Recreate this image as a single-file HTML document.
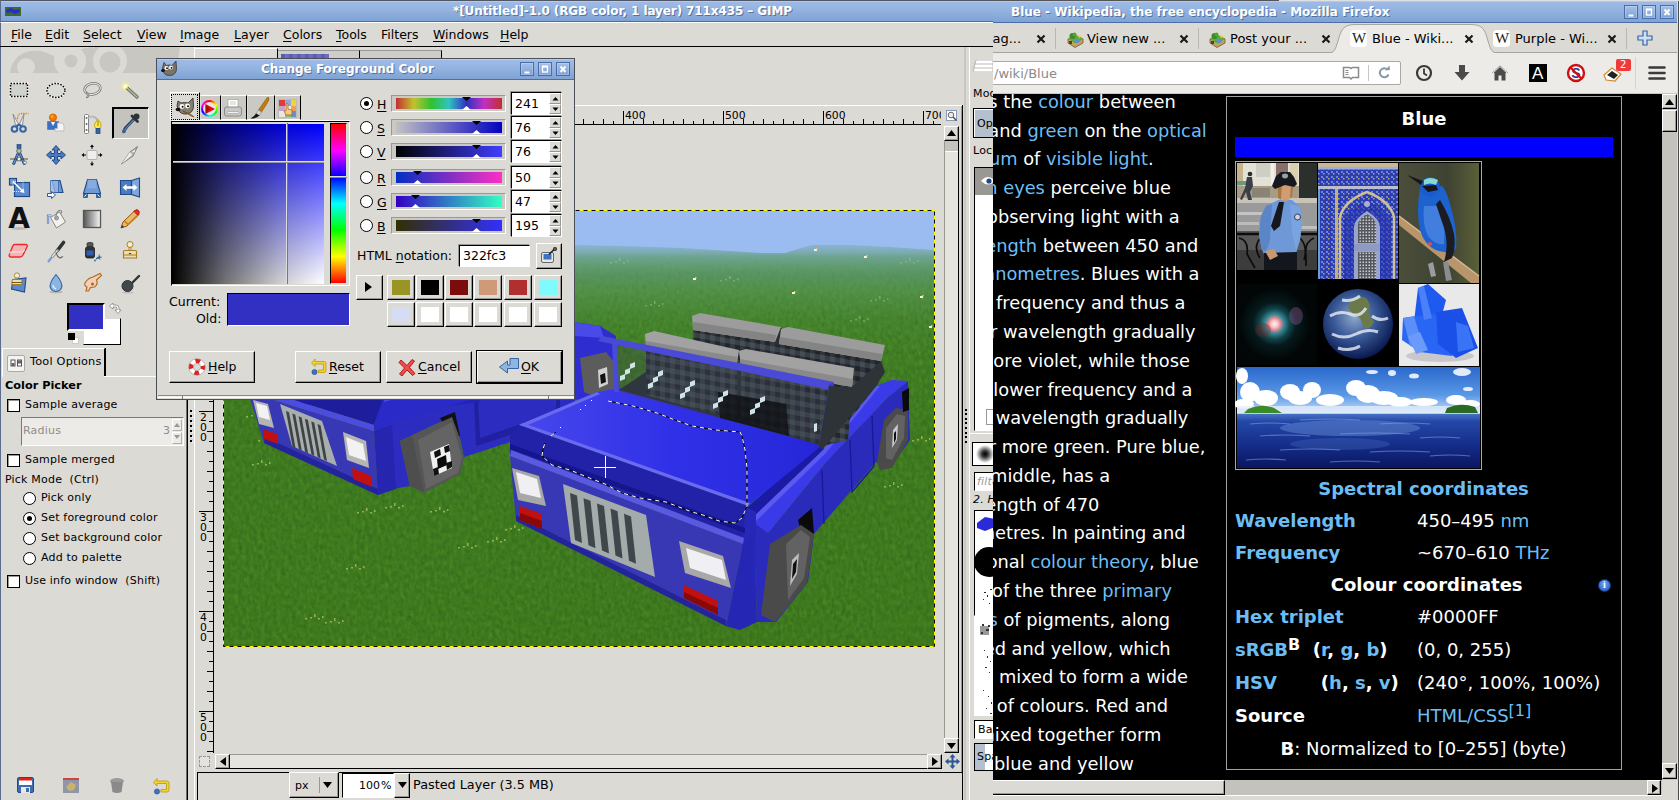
<!DOCTYPE html>
<html lang="en">
<head>
<meta charset="utf-8">
<title>GIMP and Firefox</title>
<style>
*{box-sizing:border-box;margin:0;padding:0}
html,body{width:1680px;height:800px;overflow:hidden;background:#dcdad5}
body{position:relative;font-family:"DejaVu Sans","Liberation Sans",sans-serif;font-size:13px;color:#000;line-height:1}
.a{position:absolute}
.t{position:absolute;white-space:nowrap}
u{text-decoration:underline;text-underline-offset:2px}
/* ---------- window title bars ---------- */
.tb{position:absolute;background:linear-gradient(#9ebbe6 0,#98b6e2 30%,#7fa3d5 100%);border-top:1px solid #505664;border-bottom:1px solid #4b6ea6;box-shadow:inset 0 1px 0 #b2caee}
.tbt{position:absolute;color:#fff;font-weight:bold;font-size:13px;text-shadow:1px 1px 0 rgba(40,60,100,.55);white-space:nowrap}
.wb{position:absolute;width:14px;height:14px;border:1px solid #4a6da8;background:linear-gradient(#a4c0e8,#7da1d6);box-shadow:inset 0 0 0 1px rgba(255,255,255,.22)}
/* ---------- gimp ---------- */
#gimp{left:0;top:0;width:993px;height:800px;background:#dcdad5}
.menu span{position:absolute;top:29px;font-size:12.5px}
.ck{position:absolute;width:13px;height:13px;background:#fff;border:1px solid #000;box-shadow:inset 1px 1px 0 #9a9892}
.rd{position:absolute;width:13px;height:13px;background:#fff;border:1px solid #000;border-radius:50%}
.rd.on::after{content:"";position:absolute;left:3px;top:3px;width:5px;height:5px;border-radius:50%;background:#000}
.sm{font-size:11px;letter-spacing:.2px}
.btn{position:absolute;background:#dcdad5;border:1px solid;border-color:#fff #000 #000 #fff;box-shadow:inset -1px -1px 0 #9a9892}
.sunk{position:absolute;border:1px solid;border-color:#9a9892 #fff #fff #9a9892;box-shadow:inset 1px 1px 0 #000}
/* ---------- firefox ---------- */
#ff{left:993px;top:0;width:687px;height:800px;background:#000;overflow:hidden}
.wk{color:#fff;font-size:17.8px}
.wk a,.lk{color:#6dbef6;text-decoration:none}
.ib{font-size:18px;color:#fff}
.ib b.l{color:#6cbaf2}
</style>
</head>
<body>
<!-- ======================= GIMP WINDOW ======================= -->
<div id="gimp" class="a">
<!-- title bar -->
<div class="tb" style="left:0;top:0;width:993px;height:22px;border-left:1px solid #5b6c8c"></div>
<svg class="a" style="left:5px;top:7px" width="16" height="9" viewBox="0 0 16 9"><rect width="16" height="9" fill="#3e6b2c"/><path d="M1 3l5-2 4 2 4-1 1 3-5 2-4-2-4 1z" fill="#2a2ad0"/></svg>
<div class="tbt" style="left:453px;top:5px;font-size:12px;letter-spacing:-.1px">*[Untitled]-1.0 (RGB color, 1 layer) 711x435 – GIMP</div>
<!-- menu bar -->
<div class="a" style="left:0;top:22px;width:993px;height:24px;background:#dcdad5;border-left:1px solid #5b6c8c;border-top:1px solid #fff"></div>
<div class="menu">
<span style="left:11px"><u>F</u>ile</span><span style="left:45px"><u>E</u>dit</span><span style="left:83px"><u>S</u>elect</span><span style="left:137px"><u>V</u>iew</span><span style="left:180px"><u>I</u>mage</span><span style="left:234px"><u>L</u>ayer</span><span style="left:283px"><u>C</u>olors</span><span style="left:336px"><u>T</u>ools</span><span style="left:381px">Filte<u>r</u>s</span><span style="left:433px"><u>W</u>indows</span><span style="left:500px"><u>H</u>elp</span>
</div>
<div class="a" style="left:0;top:46px;width:993px;height:1px;background:#000"></div>
<div class="a" style="left:0;top:47px;width:1px;height:753px;background:#5b6c8c"></div>
<!-- toolbox wilber watermark -->
<svg class="a" style="left:10px;top:47px" width="170" height="27" viewBox="0 0 170 27"><path d="M0 26C2 10 14 2 30 4c12 2 20 10 24 10 4-8 16-14 34-14h82l-4 26z" fill="#c9c7c2"/><circle cx="16" cy="20" r="9" fill="#dcdad5"/><circle cx="60" cy="14" r="16" fill="#dcdad5"/><circle cx="61" cy="14" r="6.500" fill="#c9c7c2"/><circle cx="100" cy="14" r="17" fill="#dcdad5"/><circle cx="100" cy="15" r="10.500" fill="#c9c7c2"/></svg>
<div class="a" style="left:112px;top:107px;width:37px;height:32px;background:#c5c3be;border:1px solid;border-color:#000 #fff #fff #000;box-shadow:inset 1px 1px 0 #000"></div>
<svg class="a" style="left:7px;top:79px" width="24" height="24" viewBox="0 0 24 24"><rect x="3.500" y="4.500" width="17" height="13" fill="#d3d7cf" stroke="#fff" stroke-width="2"/><rect x="3.500" y="4.500" width="17" height="13" fill="#d0d3cd" stroke="#000" stroke-width="1.500" stroke-dasharray="1.500 1.500"/></svg>
<svg class="a" style="left:43.5px;top:79px" width="24" height="24" viewBox="0 0 24 24"><ellipse cx="12" cy="11.500" rx="9" ry="7" fill="#dcdedb" stroke="#fff" stroke-width="2"/><ellipse cx="12" cy="11.500" rx="9" ry="7" fill="#d9dbd7" stroke="#000" stroke-width="1.500" stroke-dasharray="1.500 1.500"/></svg>
<svg class="a" style="left:80px;top:79px" width="24" height="24" viewBox="0 0 24 24"><ellipse cx="12.500" cy="10" rx="8" ry="5.500" fill="none" stroke="#777" stroke-width="2.600" transform="rotate(-12 12 10)"/><ellipse cx="12.500" cy="10" rx="8" ry="5.500" fill="none" stroke="#e4e4e2" stroke-width="1.100" transform="rotate(-12 12 10)"/><path d="M6 13l1.500 3.500-1 2.500 2-1 .5-3z" fill="#ddd" stroke="#777" stroke-width=".9"/></svg>
<svg class="a" style="left:117.5px;top:79px" width="24" height="24" viewBox="0 0 24 24"><circle cx="7.500" cy="7.500" r="4.500" fill="#fff36a" opacity=".55"/><path d="M9 9l10 9" stroke="#555" stroke-width="3.200" stroke-linecap="round"/><path d="M9 9l10 9" stroke="#a9b59a" stroke-width="1.700" stroke-linecap="round"/><circle cx="7.500" cy="7.500" r="2.200" fill="#fffde0"/></svg>
<svg class="a" style="left:7px;top:111px" width="24" height="24" viewBox="0 0 24 24"><path d="M12 14l-6-11 2.500 11zM12 14l5-11-1.500 11z" fill="#eeeeec" stroke="#888" stroke-width=".9"/><path d="M10.500 8q0-5.500 4-5.500h7" fill="none" stroke="#f57900" stroke-width="1.300" stroke-dasharray="1.300 1"/><circle cx="7.500" cy="18" r="2.800" fill="none" stroke="#3465a4" stroke-width="2"/><circle cx="16" cy="18" r="2.800" fill="none" stroke="#3465a4" stroke-width="2"/><path d="M9.500 15.500l2.500-2 2.500 2" fill="none" stroke="#3465a4" stroke-width="2"/></svg>
<svg class="a" style="left:43.5px;top:111px" width="24" height="24" viewBox="0 0 24 24"><rect x="3.500" y="10.500" width="11" height="8" fill="#3b6fc4" stroke="#75507b" stroke-dasharray="1 1"/><path d="M7 11l2 4 2-4" fill="#fff"/><circle cx="9" cy="6.500" r="3.600" fill="#f57900" stroke="#ce5c00" stroke-width=".8"/><circle cx="8" cy="5.500" r="1.300" fill="#fcaf3e"/><path d="M13.500 12h4q2.500 0 2.500 3v5h-9v-2.500h2.500z" fill="#f4f4f2" stroke="#bbb" stroke-width=".9"/></svg>
<svg class="a" style="left:80px;top:111px" width="24" height="24" viewBox="0 0 24 24"><rect x="4.500" y="3.500" width="4" height="19" rx="1" fill="#fff" stroke="#777" stroke-width=".9"/><circle cx="6.500" cy="7" r="1" fill="#666"/><circle cx="6.500" cy="13" r="1" fill="#666"/><circle cx="6.500" cy="19" r="1" fill="#666"/><path d="M8 7q6-4 10 3" fill="none" stroke="#888" stroke-width="1.600"/><path d="M8 7q6-4 10 3" fill="none" stroke="#eee" stroke-width=".7"/><path d="M18 8.500q4 4 3 7l-1.500 2h-3.500l-1.500-2q-1-3 3.500-7z" fill="#fce94f" stroke="#c4a000" stroke-width=".9"/><path d="M18 10v5" stroke="#8f7a00" stroke-width=".9"/><rect x="16" y="17.500" width="4" height="5" fill="#3465a4" stroke="#204a87" stroke-width=".8"/></svg>
<svg class="a" style="left:117.5px;top:111px" width="24" height="24" viewBox="0 0 24 24"><path d="M16.500 7.500l-8 8.500q-2 2-2.500 4.500" fill="none" stroke="#2e3436" stroke-width="3.200" stroke-linecap="round"/><path d="M15.500 9l-7 7.500q-1.500 1.500-2 3.500" fill="none" stroke="#4f7dbf" stroke-width="1.600" stroke-linecap="round"/><path d="M14 5l5.500 5.500" stroke="#2e3436" stroke-width="2.800" stroke-linecap="round"/><circle cx="18.500" cy="5.500" r="3" fill="#2e3436"/><path d="M5.500 17.500q3 3.500 0 5-3-1.500 0-5z" fill="#3465a4"/></svg>
<svg class="a" style="left:7px;top:143px" width="24" height="24" viewBox="0 0 24 24"><path d="M12 6l-6.500 15 2 .5 4.500-11 4.500 11 2-.5z" fill="#729fcf" stroke="#204a87" stroke-width="1"/><rect x="10" y="1.500" width="4" height="4" fill="#3465a4" stroke="#204a87" stroke-width=".7"/><circle cx="12" cy="8" r="2.300" fill="#babdb6" stroke="#555" stroke-width=".8"/><path d="M3 16h18" stroke="#333" stroke-width=".8"/><rect x="10.200" y="14.200" width="3.600" height="3.600" fill="#eee" stroke="#555" stroke-width=".8"/><circle cx="18" cy="19.500" r="1.500" fill="#eee" stroke="#555" stroke-width=".6"/></svg>
<svg class="a" style="left:43.5px;top:143px" width="24" height="24" viewBox="0 0 24 24"><path d="M12 2.500l4 4.500h-2.500v3.500h3.500v-2.500l4.500 4-4.500 4v-2.500h-3.500v3.500h2.500l-4 4.500-4-4.500h2.500v-3.500h-3.500v2.500l-4.500-4 4.500-4v2.500h3.500v-3.500h-2.500z" fill="#4a7bc0" stroke="#204a87" stroke-width="1"/></svg>
<svg class="a" style="left:80px;top:143px" width="24" height="24" viewBox="0 0 24 24"><rect x="7" y="7.500" width="10" height="9" rx="1" fill="#eeeeec" stroke="#aaa" stroke-width=".9"/><path d="M12 1.500l2 2.500h-1.500v2h-1v-2h-1.500zM12 23l-2-2.500h1.500v-2h1v2h1.500zM1.500 12l2.500-2v1.500h2v1h-2v1.500zM22.500 12l-2.500 2v-1.500h-2v-1h2v-1.500z" fill="#000"/></svg>
<svg class="a" style="left:117.5px;top:143px" width="24" height="24" viewBox="0 0 24 24"><path d="M3.500 21l8.500-12 7.500-5.500-4.500 9.500z" fill="#babdb6" stroke="#777" stroke-width=".9"/><path d="M3.500 21l8.500-12 2 3z" fill="#eeeeec"/><path d="M13 9.500l4-3.500v3z" fill="#fff" stroke="#aaa" stroke-width=".6"/></svg>
<svg class="a" style="left:7px;top:175px" width="24" height="24" viewBox="0 0 24 24"><rect x="7.500" y="7.500" width="15" height="14" fill="#5b8ad0" stroke="#204a87" stroke-width="1.200"/><rect x="2.500" y="3.500" width="7" height="6.500" fill="#729fcf" stroke="#204a87" stroke-width="1.200"/><rect x="6" y="6.500" width="10" height="10" fill="none" stroke="#fff" stroke-width=".8" stroke-dasharray="1 1"/><path d="M6 6.500l10 10" stroke="#fff" stroke-width="1.600"/><path d="M17.500 18l-1-4.500-3.500 3.500z" fill="#fff"/></svg>
<svg class="a" style="left:43.5px;top:175px" width="24" height="24" viewBox="0 0 24 24"><path d="M8 5.500h8l3 12h-8z" fill="#6e9ad6" stroke="#204a87" stroke-width="1.100"/><path d="M6.500 5.500h8v12h-8z" fill="#9dbbe6" stroke="#3465a4" stroke-width="1" opacity=".75"/><path d="M3.500 18.500h4v-2l4 3.500-4 3.500v-2h-4z" fill="#fff" stroke="#204a87" stroke-width=".9"/></svg>
<svg class="a" style="left:80px;top:175px" width="24" height="24" viewBox="0 0 24 24"><path d="M7.500 4.500h9l4 14h-17z" fill="#6e9ad6" stroke="#204a87" stroke-width="1.100"/><rect x="7.500" y="4.500" width="9" height="9" fill="#8fb2e2" opacity=".7"/><rect x="3.500" y="18.500" width="4" height="4" fill="#3465a4" stroke="#204a87" stroke-width=".7"/><rect x="16.500" y="18.500" width="4" height="4" fill="#3465a4" stroke="#204a87" stroke-width=".7"/><path d="M4.500 21.500l2-2M19.500 21.500l-2-2" stroke="#fff" stroke-width="1"/></svg>
<svg class="a" style="left:117.5px;top:175px" width="24" height="24" viewBox="0 0 24 24"><path d="M2.500 5.500h11v14h-11z" fill="#4a7bc0" stroke="#204a87" stroke-width="1.100"/><path d="M13.500 5.500l8-2.500v19l-8-2.500z" fill="#7ea6dc" stroke="#204a87" stroke-width="1.100"/><path d="M4.500 12.500l4-3.500v2.200h7v-2.200l4 3.500-4 3.500v-2.200h-7v2.200z" fill="#fff"/></svg>
<svg class="a" style="left:7px;top:207px" width="24" height="24" viewBox="0 0 24 24"><ellipse cx="12" cy="21.500" rx="8" ry="1.500" fill="#000" opacity=".15"/><text x="12" y="21" font-family="DejaVu Sans,Liberation Sans,sans-serif" font-weight="bold" font-size="28" text-anchor="middle" fill="#111">A</text></svg>
<svg class="a" style="left:43.5px;top:207px" width="24" height="24" viewBox="0 0 24 24"><path d="M4 17v-8.500h3.500" fill="none" stroke="#5d7fbf" stroke-width="2.200"/><path d="M4 17v-8.500h3.500" fill="none" stroke="#c6d4ee" stroke-width=".8"/><path d="M6.500 10.500l9-5.500 6 10-9 6z" fill="#f1f1ef" stroke="#888a85" stroke-width="1"/><path d="M12 9q1-6 4.500-5.500 2 1 .5 3" fill="none" stroke="#888a85" stroke-width="1.200"/><circle cx="12.500" cy="11" r="2" fill="#aaa" stroke="#777" stroke-width=".7"/></svg>
<svg class="a" style="left:80px;top:207px" width="24" height="24" viewBox="0 0 24 24"><defs><linearGradient id="gq" x1="0" x2="1"><stop offset="0" stop-color="#555"/><stop offset="1" stop-color="#f8f8f8"/></linearGradient></defs><rect x="3.500" y="3.500" width="17" height="17" fill="url(#gq)" stroke="#555753" stroke-width="1.300"/></svg>
<svg class="a" style="left:117.5px;top:207px" width="24" height="24" viewBox="0 0 24 24"><path d="M3 21l2-6 12-11.500 4 4-12 11.500z" fill="#e9b96e" stroke="#8f5902" stroke-width="1"/><path d="M6.500 14l3.500 3.500 11-10.500" fill="none" stroke="#c17d11" stroke-width="1.600"/><path d="M16 4.500l1.500-1.500q1.500-1 3 .5t.5 3l-1.500 1.500z" fill="#ef2929" stroke="#a40000" stroke-width=".7"/><path d="M3 21l1-3 2 2z" fill="#333"/></svg>
<svg class="a" style="left:7px;top:239px" width="24" height="24" viewBox="0 0 24 24"><path d="M7.500 5.500h11q2.500 0 1.500 2.500l-4 8q-1 2-3 2h-9q-2.500 0-1.500-2.500l3-8q1-2 2-2z" fill="#f5b5b5" stroke="#ef2929" stroke-width="1.400"/><path d="M3 14.500q0-1.500 2-1.500h9.500q2 0 3-2" fill="none" stroke="#f9d5d5" stroke-width="1.500"/></svg>
<svg class="a" style="left:43.5px;top:239px" width="24" height="24" viewBox="0 0 24 24"><path d="M19.500 3.500l-6.500 8.500" stroke="#2e3436" stroke-width="3.600" stroke-linecap="round"/><path d="M13.500 11.500l-5 6" stroke="#888a85" stroke-width="3" stroke-linecap="round"/><path d="M13 12l-4.500 5.500" stroke="#eeeeec" stroke-width="1.200" stroke-linecap="round"/><path d="M12 13q1 5 4 6l3-1.500" fill="none" stroke="#666" stroke-width="1.200"/><path d="M7.500 18.500l-3.500 4.500" stroke="#5d8fd6" stroke-width="2.200" opacity=".8"/></svg>
<svg class="a" style="left:80px;top:239px" width="24" height="24" viewBox="0 0 24 24"><path d="M5.500 10q0-2 2-2.500h5q2 .5 2 2.500v7q0 2-2 2h-5q-2 0-2-2z" fill="#2e3436" stroke="#1a1a1a" stroke-width=".8"/><rect x="6.500" y="11.500" width="7" height="5" fill="#2f5fb3"/><rect x="7" y="3.500" width="6" height="4" rx="1.500" fill="#555753" stroke="#2e3436" stroke-width=".8"/><path d="M16 19l2.500-1.500.5-3 1 3 2.500.5-2.500 1 .5 2.500-1.500-2-3 1z" fill="#3465a4"/><circle cx="15" cy="21.500" r=".9" fill="#3465a4"/></svg>
<svg class="a" style="left:117.5px;top:239px" width="24" height="24" viewBox="0 0 24 24"><circle cx="12" cy="5.500" r="3" fill="#f6efd8" stroke="#a97d1b" stroke-width="1"/><path d="M11 8.500h2v3.500h-2z" fill="#e9d9a6" stroke="#a97d1b" stroke-width=".8"/><path d="M5.500 12.500q0-1 1-1h11q1 0 1 1v6.500h-13z" fill="#eadfb8" stroke="#a97d1b" stroke-width="1.100"/><path d="M5.500 16h13" stroke="#a97d1b" stroke-width="1"/><path d="M10.500 14h3l-1.500 1.500z" fill="#333"/></svg>
<svg class="a" style="left:7px;top:271px" width="24" height="24" viewBox="0 0 24 24"><path d="M6 8.500l13-1.500-1.500 14-13-3z" fill="#5b8ad0" stroke="#204a87" stroke-width="1.100"/><circle cx="10" cy="4.500" r="2.600" fill="#f6efd8" stroke="#a97d1b" stroke-width=".9"/><path d="M5 9.500q0-1 1-1h8q1 0 1 1v4h-10z" fill="#eadfb8" stroke="#a97d1b" stroke-width="1"/><path d="M5 11.500h10" stroke="#5a4a10" stroke-width=".9"/></svg>
<svg class="a" style="left:43.5px;top:271px" width="24" height="24" viewBox="0 0 24 24"><ellipse cx="12" cy="21" rx="7" ry="1.500" fill="#000" opacity=".15"/><path d="M12 3.500q7.500 9 5.500 13.500-2 3.500-5.500 3.500t-5.500-3.500q-2-4.500 5.500-13.500z" fill="#8db3e0" stroke="#3465a4" stroke-width="1.100"/><path d="M9 14q0 3 3 4" fill="none" stroke="#fff" stroke-width="1.200" opacity=".8"/></svg>
<svg class="a" style="left:80px;top:271px" width="24" height="24" viewBox="0 0 24 24"><path d="M5 12q3-5 8-6l7-3.500 1.500 2-5 4.500q2 4-2 7l-4 .5-2 3.500h-2.500l1-4q-3-1-2-4z" fill="#f3d0b5" stroke="#b0661a" stroke-width="1.100"/><circle cx="12.500" cy="13" r="1.500" fill="#b0661a"/></svg>
<svg class="a" style="left:117.5px;top:271px" width="24" height="24" viewBox="0 0 24 24"><path d="M11 15l10-10" stroke="#2e3436" stroke-width="2.400" stroke-linecap="round"/><circle cx="9.500" cy="15" r="5.500" fill="#41474a" stroke="#2e3436" stroke-width="1"/><ellipse cx="10" cy="21.500" rx="6" ry="1.200" fill="#000" opacity=".12"/></svg>
<!-- fg/bg -->
<div class="a" style="left:83px;top:318px;width:38px;height:27px;background:#fff;border:1px solid;border-color:#dcdad5 #000 #000 #dcdad5"></div>
<div class="a" style="left:67px;top:303px;width:38px;height:28px;background:#322fc3;border:2px solid;border-color:#000 #fff #fff #000"></div>
<div class="a" style="left:72px;top:337px;width:7px;height:7px;background:#fff;border:1px solid #ccc"></div>
<div class="a" style="left:68px;top:333px;width:7px;height:7px;background:#000"></div>
<svg class="a" style="left:108px;top:302px" width="14" height="14" viewBox="0 0 14 14"><path d="M1.500 4l3.500-3v2h3q3 0 3 3v2h2l-3 3.500-3-3.500h2v-2q0-1-1-1h-3v2z" fill="#fff" stroke="#888" stroke-width=".8"/></svg>
<!-- tool options tab -->
<div class="a" style="left:2px;top:348px;width:103px;height:29px;border:1px solid;border-color:#fff #000 transparent #fff;box-shadow:1px 0 0 #000"></div>
<div class="a" style="left:104px;top:376px;width:82px;height:1px;background:#fff"></div>
<svg class="a" style="left:7px;top:355px" width="18" height="17" viewBox="0 0 18 17"><rect x=".5" y=".5" width="17" height="16" rx="1.500" fill="#f4f4f2" stroke="#aaa"/><rect x="4" y="5" width="4" height="6" fill="#fff" stroke="#555"/><rect x="10.500" y="5" width="4" height="6" fill="#fff" stroke="#555"/><rect x="4.500" y="8" width="3" height="3" fill="#666"/><rect x="11" y="5.500" width="3" height="3" fill="#666"/></svg>
<div class="t sm" style="left:30px;top:356px;font-size:11.300px">Tool Options</div>
<div class="t" style="left:5px;top:380px;font-weight:bold;font-size:11.300px">Color Picker</div>
<div class="ck" style="left:7px;top:399px"></div><div class="t sm" style="left:25px;top:399px">Sample average</div>
<div class="a" style="left:21px;top:417px;width:163px;height:29px;background:#edebe7;border:1px solid;border-color:#7a7872 #fff #fff #7a7872"></div>
<div class="t sm" style="left:23px;top:425px;color:#8d8b86">Radius</div><div class="t sm" style="left:163px;top:425px;color:#8d8b86">3</div>
<div class="a" style="left:172px;top:419px;width:10px;height:12px;border:1px solid;border-color:#fff #b0aea8 #b0aea8 #fff"></div>
<div class="a" style="left:172px;top:432px;width:10px;height:12px;border:1px solid;border-color:#fff #b0aea8 #b0aea8 #fff"></div>
<svg class="a" style="left:174px;top:422px" width="6" height="18" viewBox="0 0 6 18"><path d="M0 5l3-4 3 4zM0 13l3 4 3-4z" fill="#9a9892"/></svg>
<div class="ck" style="left:7px;top:454px"></div><div class="t sm" style="left:25px;top:454px">Sample merged</div>
<div class="t sm" style="left:5px;top:474px">Pick Mode&nbsp; (Ctrl)</div>
<div class="rd" style="left:23px;top:492px"></div><div class="t sm" style="left:41px;top:492px">Pick only</div>
<div class="rd on" style="left:23px;top:512px"></div><div class="t sm" style="left:41px;top:512px">Set foreground color</div>
<div class="rd" style="left:23px;top:532px"></div><div class="t sm" style="left:41px;top:532px">Set background color</div>
<div class="rd" style="left:23px;top:552px"></div><div class="t sm" style="left:41px;top:552px">Add to palette</div>
<div class="ck" style="left:7px;top:575px"></div><div class="t sm" style="left:25px;top:575px">Use info window&nbsp; (Shift)</div>
<!-- bottom icons -->
<svg class="a" style="left:17px;top:777px" width="18" height="17" viewBox="0 0 18 17"><rect x=".5" y=".5" width="16" height="15" rx="1.500" fill="#3f6cb0" stroke="#244a85"/><rect x="2" y="1" width="13" height="7" fill="#fff"/><rect x="2" y="1" width="13" height="2.500" fill="#e02020"/><rect x="4" y="10" width="9" height="6" fill="#e8e8e8"/><rect x="9" y="11" width="3" height="4" fill="#3f6cb0"/></svg>
<svg class="a" style="left:62px;top:777px" width="18" height="17" viewBox="0 0 18 17"><rect x="1" y="1" width="16" height="15" fill="#8f96a8"/><rect x="1" y="1" width="16" height="2" fill="#c44"/><path d="M4 10l5-5 5 3-2 5-5 1z" fill="#c9b46a"/></svg>
<svg class="a" style="left:108px;top:777px" width="18" height="17" viewBox="0 0 18 17"><ellipse cx="9" cy="4" rx="7" ry="3" fill="#9a9a9a"/><path d="M3 5l1.500 10q4.500 2 9 0L15 5z" fill="#8a8a8a"/></svg>
<svg class="a" style="left:153px;top:777px" width="18" height="18" viewBox="0 0 18 18"><path d="M4 4h10q2 0 2 2v7q0 2-2 2H8v-2.500h5.500v-6H4v2.500L.5 5.500 4 1.500z" fill="#f5d328" stroke="#b89a10" stroke-width=".8"/><circle cx="4" cy="14.500" r="2.600" fill="#3f73c0" stroke="#244a85" stroke-width=".6"/></svg>
<!-- dock divider -->
<div class="a" style="left:186px;top:60px;width:1px;height:740px;background:#6e6c68"></div><div class="a" style="left:187px;top:60px;width:1px;height:740px;background:#000"></div>



<div class="a" style="left:194px;top:48px;width:84px;height:12px;border:1px solid;border-color:#fff #000 transparent #fff"></div>
<div class="a" style="left:278px;top:50px;width:82px;height:10px;background:#cfcdc8;border-top:1px solid #9a9892;border-right:1px solid #000"></div>
<div class="a" style="left:281px;top:54px;width:48px;height:6px;background:repeating-linear-gradient(90deg,#5e5bb5 0 4px,#6f6cc0 4px 8px)"></div>
<div class="a" style="left:360px;top:50px;width:82px;height:10px;background:#cfcdc8;border-top:1px solid #9a9892;border-right:1px solid #000"></div>
<div class="a" style="left:198px;top:105px;width:764px;height:1px;background:#fff"></div>
<div class="a" style="left:962px;top:105px;width:1px;height:695px;background:#000"></div>
<div class="a" style="left:961px;top:106px;width:1px;height:666px;background:#9a9892"></div>
<div class="a" style="left:194px;top:47px;width:1px;height:753px;background:#fff"></div>
<svg class="a" style="left:190px;top:410px" width="4" height="34" viewBox="0 0 4 34"><rect x="0" y="0" width="2" height="2" fill="#000"/><rect x="2" y="2" width="1" height="1" fill="#fff"/><rect x="0" y="5" width="2" height="2" fill="#000"/><rect x="2" y="7" width="1" height="1" fill="#fff"/><rect x="0" y="10" width="2" height="2" fill="#000"/><rect x="2" y="12" width="1" height="1" fill="#fff"/><rect x="0" y="15" width="2" height="2" fill="#000"/><rect x="2" y="17" width="1" height="1" fill="#fff"/><rect x="0" y="20" width="2" height="2" fill="#000"/><rect x="2" y="22" width="1" height="1" fill="#fff"/><rect x="0" y="25" width="2" height="2" fill="#000"/><rect x="2" y="27" width="1" height="1" fill="#fff"/><rect x="0" y="30" width="2" height="2" fill="#000"/><rect x="2" y="32" width="1" height="1" fill="#fff"/></svg>
<svg class="a" style="left:214px;top:105px" width="727" height="20" viewBox="0 0 727 20"><path d="M9.5 6v14M19.5 16v4M29.5 14v6M39.5 16v4M49.5 14v6M59.5 16v4M69.5 14v6M79.5 16v4M89.5 14v6M99.5 16v4M109.5 6v14M119.5 16v4M129.5 14v6M139.5 16v4M149.5 14v6M159.5 16v4M169.5 14v6M179.5 16v4M189.5 14v6M199.5 16v4M209.5 6v14M219.5 16v4M229.5 14v6M239.5 16v4M249.5 14v6M259.5 16v4M269.5 14v6M279.5 16v4M289.5 14v6M299.5 16v4M309.5 6v14M319.5 16v4M329.5 14v6M339.5 16v4M349.5 14v6M359.5 16v4M369.5 14v6M379.5 16v4M389.5 14v6M399.5 16v4M409.5 6v14M419.5 16v4M429.5 14v6M439.5 16v4M449.5 14v6M459.5 16v4M469.5 14v6M479.5 16v4M489.5 14v6M499.5 16v4M509.5 6v14M519.5 16v4M529.5 14v6M539.5 16v4M549.5 14v6M559.5 16v4M569.5 14v6M579.5 16v4M589.5 14v6M599.5 16v4M609.5 6v14M619.5 16v4M629.5 14v6M639.5 16v4M649.5 14v6M659.5 16v4M669.5 14v6M679.5 16v4M689.5 14v6M699.5 16v4M709.5 6v14M719.5 16v4" stroke="#000" stroke-width="1" fill="none"/><path d="M0 19.500h727" stroke="#000"/><text x="111" y="14" font-size="10.800" font-family="DejaVu Sans,Liberation Sans,sans-serif">100</text><text x="211" y="14" font-size="10.800" font-family="DejaVu Sans,Liberation Sans,sans-serif">200</text><text x="311" y="14" font-size="10.800" font-family="DejaVu Sans,Liberation Sans,sans-serif">300</text><text x="411" y="14" font-size="10.800" font-family="DejaVu Sans,Liberation Sans,sans-serif">400</text><text x="511" y="14" font-size="10.800" font-family="DejaVu Sans,Liberation Sans,sans-serif">500</text><text x="611" y="14" font-size="10.800" font-family="DejaVu Sans,Liberation Sans,sans-serif">600</text><text x="711" y="14" font-size="10.800" font-family="DejaVu Sans,Liberation Sans,sans-serif">700</text></svg>
<svg class="a" style="left:199px;top:125px" width="15" height="628" viewBox="0 0 15 628"><path d="M8 6.5h6M10 16.5h4M8 26.5h6M10 36.5h4M8 46.5h6M10 56.5h4M8 66.5h6M10 76.5h4M0 86.5h14M10 96.5h4M8 106.5h6M10 116.5h4M8 126.5h6M10 136.5h4M8 146.5h6M10 156.5h4M8 166.5h6M10 176.5h4M0 186.5h14M10 196.5h4M8 206.5h6M10 216.5h4M8 226.5h6M10 236.5h4M8 246.5h6M10 256.5h4M8 266.5h6M10 276.5h4M0 286.5h14M10 296.5h4M8 306.5h6M10 316.5h4M8 326.5h6M10 336.5h4M8 346.5h6M10 356.5h4M8 366.5h6M10 376.5h4M0 386.5h14M10 396.5h4M8 406.5h6M10 416.5h4M8 426.5h6M10 436.5h4M8 446.5h6M10 456.5h4M8 466.5h6M10 476.5h4M0 486.5h14M10 496.5h4M8 506.5h6M10 516.5h4M8 526.5h6M10 536.5h4M8 546.5h6M10 556.5h4M8 566.5h6M10 576.5h4M0 586.5h14M10 596.5h4M8 606.5h6M10 616.5h4M8 626.5h6" stroke="#000" stroke-width="1" fill="none"/><path d="M14.500 0v628" stroke="#000"/><text x="1" y="196" font-size="10.800" font-family="DejaVu Sans,Liberation Sans,sans-serif">1</text><text x="1" y="206" font-size="10.800" font-family="DejaVu Sans,Liberation Sans,sans-serif">0</text><text x="1" y="216" font-size="10.800" font-family="DejaVu Sans,Liberation Sans,sans-serif">0</text><text x="1" y="296" font-size="10.800" font-family="DejaVu Sans,Liberation Sans,sans-serif">2</text><text x="1" y="306" font-size="10.800" font-family="DejaVu Sans,Liberation Sans,sans-serif">0</text><text x="1" y="316" font-size="10.800" font-family="DejaVu Sans,Liberation Sans,sans-serif">0</text><text x="1" y="396" font-size="10.800" font-family="DejaVu Sans,Liberation Sans,sans-serif">3</text><text x="1" y="406" font-size="10.800" font-family="DejaVu Sans,Liberation Sans,sans-serif">0</text><text x="1" y="416" font-size="10.800" font-family="DejaVu Sans,Liberation Sans,sans-serif">0</text><text x="1" y="496" font-size="10.800" font-family="DejaVu Sans,Liberation Sans,sans-serif">4</text><text x="1" y="506" font-size="10.800" font-family="DejaVu Sans,Liberation Sans,sans-serif">0</text><text x="1" y="516" font-size="10.800" font-family="DejaVu Sans,Liberation Sans,sans-serif">0</text><text x="1" y="596" font-size="10.800" font-family="DejaVu Sans,Liberation Sans,sans-serif">5</text><text x="1" y="606" font-size="10.800" font-family="DejaVu Sans,Liberation Sans,sans-serif">0</text><text x="1" y="616" font-size="10.800" font-family="DejaVu Sans,Liberation Sans,sans-serif">0</text></svg>
<svg class="a" style="left:223px;top:211px" width="711" height="435" viewBox="223 211 711 435">
<defs>
<linearGradient id="gnd" gradientUnits="userSpaceOnUse" x1="0" y1="244" x2="0" y2="646"><stop offset="0.0000" stop-color="#8ab4d2"/><stop offset="0.0149" stop-color="#82aebe"/><stop offset="0.0299" stop-color="#70a596"/><stop offset="0.0522" stop-color="#649e78"/><stop offset="0.0771" stop-color="#5a9664"/><stop offset="0.1144" stop-color="#55944f"/><stop offset="0.1393" stop-color="#509046"/><stop offset="0.1891" stop-color="#488734"/><stop offset="0.2886" stop-color="#428028"/><stop offset="0.4627" stop-color="#3f7b23"/><stop offset="1.0000" stop-color="#3e7920"/></linearGradient>
<filter id="gn" x="0" y="0" width="100%" height="100%"><feTurbulence type="fractalNoise" baseFrequency=".28 .2" numOctaves="2" seed="7" result="n"/><feColorMatrix in="n" type="matrix" values="0 0 0 0 0  0 0 0 0 0  0 0 0 0 0  .9 .9 0 0 -.62" result="a"/><feFlood flood-color="#2c5e14" result="f"/><feComposite in="f" in2="a" operator="in"/></filter>
<filter id="gl" x="0" y="0" width="100%" height="100%"><feTurbulence type="fractalNoise" baseFrequency=".26 .18" numOctaves="2" seed="23" result="n"/><feColorMatrix in="n" type="matrix" values="0 0 0 0 0  0 0 0 0 0  0 0 0 0 0  .9 .9 0 0 -.68" result="a"/><feFlood flood-color="#5a9a2a" result="f"/><feComposite in="f" in2="a" operator="in"/></filter>
<linearGradient id="fade" x1="0" y1="0" x2="0" y2="1"><stop offset="0" stop-color="#fff" stop-opacity="0"/><stop offset=".1" stop-color="#fff" stop-opacity="0"/><stop offset=".3" stop-color="#fff" stop-opacity="1"/><stop offset="1" stop-color="#fff" stop-opacity="1"/></linearGradient><mask id="gm"><rect x="223" y="211" width="711" height="435" fill="url(#fade)"/></mask>
<linearGradient id="hood" x1="0" y1="0" x2="1" y2="0"><stop offset="0" stop-color="#4848ec"/><stop offset=".5" stop-color="#3030e8"/><stop offset="1" stop-color="#2626d8"/></linearGradient>
<pattern id="cob" width="10" height="10" patternUnits="userSpaceOnUse" patternTransform="skewY(10)"><rect x="0" y="0" width="5" height="5" fill="#56606c" opacity=".55"/><rect x="5" y="5" width="5" height="5" fill="#15181c" opacity=".6"/><rect x="5" y="0" width="5" height="5" fill="#3c4650" opacity=".5"/></pattern>
</defs>
<rect x="223" y="211" width="711" height="435" fill="#9bbcf0"/>
<path d="M223 246 L260 245 L300 244 L360 245 L420 246 L500 245 L574 245 L620 246 L680 248 L730 251 L760 253 L785 253 L798 249 L812 245 L850 245 L890 247 L934 250 L934 646 L223 646 z" fill="url(#gnd)"/>
<g mask="url(#gm)"><rect x="223" y="211" width="711" height="435" filter="url(#gn)" opacity=".7"/><rect x="223" y="211" width="711" height="435" filter="url(#gl)" opacity=".65"/></g>
<g fill="#a8c060" opacity=".8"><rect x="246" y="416" width="2" height="1.500"/><rect x="251" y="415" width="2" height="1.500"/><rect x="255" y="412" width="1.500" height="3"/><rect x="259" y="416" width="2" height="1.500"/><rect x="263" y="414" width="1.500" height="2"/></g>
<g fill="#a8c060" opacity=".8"><rect x="258" y="440" width="2" height="1.500"/><rect x="263" y="439" width="2" height="1.500"/><rect x="267" y="436" width="1.500" height="3"/><rect x="271" y="440" width="2" height="1.500"/><rect x="275" y="438" width="1.500" height="2"/></g>
<g fill="#a8c060" opacity=".8"><rect x="252" y="464" width="2" height="1.500"/><rect x="257" y="463" width="2" height="1.500"/><rect x="261" y="460" width="1.500" height="3"/><rect x="265" y="464" width="2" height="1.500"/><rect x="269" y="462" width="1.500" height="2"/></g>
<g fill="#a8c060" opacity=".8"><rect x="357" y="512" width="2" height="1.500"/><rect x="362" y="511" width="2" height="1.500"/><rect x="366" y="508" width="1.500" height="3"/><rect x="370" y="512" width="2" height="1.500"/><rect x="374" y="510" width="1.500" height="2"/></g>
<g fill="#a8c060" opacity=".8"><rect x="385" y="507" width="2" height="1.500"/><rect x="390" y="506" width="2" height="1.500"/><rect x="394" y="503" width="1.500" height="3"/><rect x="398" y="507" width="2" height="1.500"/><rect x="402" y="505" width="1.500" height="2"/></g>
<g fill="#a8c060" opacity=".8"><rect x="430" y="511" width="2" height="1.500"/><rect x="435" y="510" width="2" height="1.500"/><rect x="439" y="507" width="1.500" height="3"/><rect x="443" y="511" width="2" height="1.500"/><rect x="447" y="509" width="1.500" height="2"/></g>
<g fill="#a8c060" opacity=".8"><rect x="458" y="547" width="2" height="1.500"/><rect x="463" y="546" width="2" height="1.500"/><rect x="467" y="543" width="1.500" height="3"/><rect x="471" y="547" width="2" height="1.500"/><rect x="475" y="545" width="1.500" height="2"/></g>
<g fill="#a8c060" opacity=".8"><rect x="487" y="541" width="2" height="1.500"/><rect x="492" y="540" width="2" height="1.500"/><rect x="496" y="537" width="1.500" height="3"/><rect x="500" y="541" width="2" height="1.500"/><rect x="504" y="539" width="1.500" height="2"/></g>
<g fill="#a8c060" opacity=".8"><rect x="505" y="529" width="2" height="1.500"/><rect x="510" y="528" width="2" height="1.500"/><rect x="514" y="525" width="1.500" height="3"/><rect x="518" y="529" width="2" height="1.500"/><rect x="522" y="527" width="1.500" height="2"/></g>
<g fill="#a8c060" opacity=".8"><rect x="305" y="618" width="2" height="1.500"/><rect x="310" y="617" width="2" height="1.500"/><rect x="314" y="614" width="1.500" height="3"/><rect x="318" y="618" width="2" height="1.500"/><rect x="322" y="616" width="1.500" height="2"/></g>
<g fill="#a8c060" opacity=".8"><rect x="325" y="622" width="2" height="1.500"/><rect x="330" y="621" width="2" height="1.500"/><rect x="334" y="618" width="1.500" height="3"/><rect x="338" y="622" width="2" height="1.500"/><rect x="342" y="620" width="1.500" height="2"/></g>
<g fill="#a8c060" opacity=".8"><rect x="346" y="568" width="2" height="1.500"/><rect x="351" y="567" width="2" height="1.500"/><rect x="355" y="564" width="1.500" height="3"/><rect x="359" y="568" width="2" height="1.500"/><rect x="363" y="566" width="1.500" height="2"/></g>
<g fill="#a8c060" opacity=".8"><rect x="884" y="486" width="2" height="1.500"/><rect x="889" y="485" width="2" height="1.500"/><rect x="893" y="482" width="1.500" height="3"/><rect x="897" y="486" width="2" height="1.500"/><rect x="901" y="484" width="1.500" height="2"/></g>
<g fill="#a8c060" opacity=".8"><rect x="912" y="440" width="2" height="1.500"/><rect x="917" y="439" width="2" height="1.500"/><rect x="921" y="436" width="1.500" height="3"/><rect x="925" y="440" width="2" height="1.500"/><rect x="929" y="438" width="1.500" height="2"/></g>
<g fill="#9cc890" opacity=".5"><rect x="645" y="305" width="2" height="1.500"/><rect x="650" y="304" width="2" height="1.500"/><rect x="654" y="301" width="1.500" height="3"/><rect x="658" y="305" width="2" height="1.500"/><rect x="662" y="303" width="1.500" height="2"/></g>
<g fill="#9cc890" opacity=".5"><rect x="720" y="280" width="2" height="1.500"/><rect x="725" y="279" width="2" height="1.500"/><rect x="729" y="276" width="1.500" height="3"/><rect x="733" y="280" width="2" height="1.500"/><rect x="737" y="278" width="1.500" height="2"/></g>
<g fill="#9cc890" opacity=".5"><rect x="870" y="300" width="2" height="1.500"/><rect x="875" y="299" width="2" height="1.500"/><rect x="879" y="296" width="1.500" height="3"/><rect x="883" y="300" width="2" height="1.500"/><rect x="887" y="298" width="1.500" height="2"/></g>
<g fill="#9cc890" opacity=".5"><rect x="900" y="262" width="2" height="1.500"/><rect x="905" y="261" width="2" height="1.500"/><rect x="909" y="258" width="1.500" height="3"/><rect x="913" y="262" width="2" height="1.500"/><rect x="917" y="260" width="1.500" height="2"/></g>
<g fill="#9cc890" opacity=".5"><rect x="610" y="262" width="2" height="1.500"/><rect x="615" y="261" width="2" height="1.500"/><rect x="619" y="258" width="1.500" height="3"/><rect x="623" y="262" width="2" height="1.500"/><rect x="627" y="260" width="1.500" height="2"/></g>
<g fill="#9cc890" opacity=".5"><rect x="700" y="330" width="2" height="1.500"/><rect x="705" y="329" width="2" height="1.500"/><rect x="709" y="326" width="1.500" height="3"/><rect x="713" y="330" width="2" height="1.500"/><rect x="717" y="328" width="1.500" height="2"/></g>
<g fill="#9cc890" opacity=".5"><rect x="850" y="320" width="2" height="1.500"/><rect x="855" y="319" width="2" height="1.500"/><rect x="859" y="316" width="1.500" height="3"/><rect x="863" y="320" width="2" height="1.500"/><rect x="867" y="318" width="1.500" height="2"/></g>
<rect x="693" y="278" width="3" height="2" fill="#f4f4f4"/><rect x="695" y="277" width="1.500" height="1.500" fill="#f0c060"/>
<rect x="792" y="292" width="3" height="2" fill="#f4f4f4"/><rect x="794" y="291" width="1.500" height="1.500" fill="#f0c060"/>
<rect x="920" y="296" width="3" height="2" fill="#f4f4f4"/><rect x="922" y="295" width="1.500" height="1.500" fill="#f0c060"/>
<rect x="929" y="326" width="3" height="2" fill="#f4f4f4"/><rect x="931" y="325" width="1.500" height="1.500" fill="#f0c060"/>
<rect x="864" y="256" width="3" height="2" fill="#f4f4f4"/><rect x="866" y="255" width="1.500" height="1.500" fill="#f0c060"/>
<rect x="814" y="249" width="3" height="2" fill="#f4f4f4"/><rect x="816" y="248" width="1.500" height="1.500" fill="#f0c060"/>
<path d="M374 380 L560 330 L575 330 L575 420 L519 439 L464 457 L455 415 L400 441 L410 486 L392 489 L378 495 z" fill="#2c2cc0"/>
<path d="M474 400 L476 446 L519 432 L560 415 L560 400 L556 400 L556 412 L480 438 L478 400 z" fill="#2020a0"/>
<path d="M248 392 L374 431 L378 495 L264 443 z" fill="#3838b4"/>
<path d="M264 443 L378 495 L378 489 L265 437 z" fill="#24249a"/>
<path d="M300 380 L480 380 L480 402 L385 414 L300 404 z" fill="#2323b4"/>
<path d="M248 366 L384 396 L374 425 L248 386 z" fill="#1e1e9c"/>
<path d="M248 386 L374 425 L374 431 L248 392 z" fill="#4c4ce0"/>
<path d="M384 396 L470 372 L470 400 L385 425 L374 431 L374 425 z" fill="#2a2ac8"/>
<path d="M384 396 L470 372 L470 378 L384 402 z" fill="#4a4ae4"/>
<path d="M374 431 L392 425 L396 489 L378 495 z" fill="#2525b0"/>
<path d="M253 400 L268 404 L274 428 L259 424 z" fill="#b5b5b5"/>
<path d="M256 403 L267 406 L270 420 L259 417 z" fill="#f2f2f2"/>
<path d="M263 429 L277 434 L278 444 L264 439 z" fill="#c01010"/>
<path d="M343 432 L366 441 L369 468 L347 460 z" fill="#b5b5b5"/>
<path d="M346 437 L363 444 L366 461 L349 455 z" fill="#f2f2f2"/>
<path d="M352 468 L371 476 L372 487 L353 479 z" fill="#c01010"/>
<path d="M280 404 L322 421 L337 466 L292 446 z" fill="#a8aeae"/>
<path d="M286 411 L289 412.2 L295.5 448 L292.5 446.5 z" fill="#3e4444"/>
<path d="M292.3 413.6 L295.3 414.8 L301.8 450.6 L298.8 449.1 z" fill="#3e4444"/>
<path d="M298.6 416.2 L301.6 417.4 L308.1 453.2 L305.1 451.7 z" fill="#3e4444"/>
<path d="M304.9 418.8 L307.9 420 L314.4 455.8 L311.4 454.3 z" fill="#3e4444"/>
<path d="M311.2 421.4 L314.2 422.6 L320.7 458.4 L317.7 456.9 z" fill="#3e4444"/>
<path d="M317.5 424 L320.5 425.2 L327 461 L324 459.5 z" fill="#3e4444"/>
<path d="M440 418 L455 412 L460 436 L452 440 z" fill="#111"/>
<path d="M400 441 L452 417 L459 436 L464 458 L460 474 L424 493 L410 486 z" fill="#565656"/>
<path d="M400 441 L412 436 L424 492 L410 486 z" fill="#4e4e4e"/>
<path d="M418 440 L452 422 L462 458 L458 473 L426 489 z" fill="#646464"/>
<path d="M430 452 L449 444 L452 468 L434 476 z" fill="#f0f0f0"/>
<path d="M434 452 L440 449 L441 455 L435 458 z" fill="#111"/>
<path d="M444 447 L449 445 L450 451 L445 453 z" fill="#111"/>
<path d="M437 459 L446 455 L447 465 L438 469 z" fill="#0a0a0a"/>
<path d="M433 469 L438 467 L439 474 L434 476 z" fill="#111"/>
<path d="M446 463 L452 461 L452 467 L447 470 z" fill="#111"/>
<path d="M574 322 L600 326 L616 336 L616 395 L574 400 z" fill="#2e2ed0"/>
<path d="M574 322 L600 326 L604 338 L574 336 z" fill="#4a4ae8"/>
<path d="M580 358 L606 352 L614 362 L614 392 L598 398 L584 392 z" fill="#5c5c5c"/>
<path d="M598 370 L607 367 L608 384 L599 388 z" fill="#d0d0d0"/>
<path d="M600 375 L605 373 L606 382 L601 384 z" fill="#111"/>
<path d="M742 505 L770 534 L758 570 L742 552 z" fill="#2b2bbb"/>
<path d="M754 530 L768 533 L826 462 L888 397 L908 381 L910 440 L890 468 L876 462 L814 534 L808 582 L776 622 L757 622 z" fill="#2b2bbb"/>
<path d="M750 520 L822 450 L876 386 L892 380 L908 381 L888 397 L826 462 L768 533 z" fill="#3a3ae8"/>
<path d="M750 520 L822 450 L876 386 L880 386 L826 453 L754 523 z" fill="#5a5af0"/>
<path d="M744 510 L820 444 L824 449 L750 520 z" fill="#1a1aa4"/>
<path d="M822 470l2 54M850 440l2 52 22-26M872 416l2 50" stroke="#18189a" stroke-width="1.300" fill="none"/>
<path d="M798 520 L812 508 L814 534 L800 528 z" fill="#0a0a0a"/>
<path d="M770 544 L801 525 L814 534 L807 583 L775 622 L761 615 z" fill="#4a4a4a"/>
<path d="M786 544 L801 530 L810 537 L804 578 L788 600 z" fill="#626262"/>
<path d="M792 560 L799 553 L797 574 L790 586 z" fill="#bdbdbd"/>
<path d="M793 564 L797 559 L796 572 L792 579 z" fill="#111"/>
<path d="M877 462 L884 420 L896 408 L908 410 L908 440 L892 468 L880 470 z" fill="#4a4a4a"/>
<path d="M886 428 L897 414 L905 416 L904 438 L892 460 L886 458 z" fill="#626262"/>
<path d="M893 430 L898 424 L897 440 L892 448 z" fill="#c8c8c8"/>
<path d="M894 433 L896 431 L896 439 L894 443 z" fill="#111"/>
<path d="M902 392 L909 388 L909 410 L903 412 z" fill="#0a0a0a"/>
<path d="M519 425 L597 392 L620 388 L826 442 L748 506 z" fill="url(#hood)"/>
<path d="M519 425 L523 423 L750 503 L748 506 z" fill="#6a6af0"/>
<path d="M519 425 L597 392 L600 394 L523 427 z" fill="#6a6af0"/>
<path d="M742 505 L756 512 L756 548 L742 548 z" fill="#2828b8"/>
<path d="M510 436 L519 425 L748 506 L745 517 L742 544 L510 456 z" fill="#2222a8"/>
<path d="M510 444 L745 528 L745 533 L510 449 z" fill="#15158c"/>
<path d="M510 456 L743 544 L726 626 L516 521 z" fill="#3838b4"/>
<path d="M510 456 L743 544 L744 538 L511 450 z" fill="#5a5ae0"/>
<path d="M743 544 L754 531 L757 622 L740 630 L726 626 z" fill="#2626b4"/>
<path d="M516 521 L726 626 L726 620 L516 515 z" fill="#24249a"/>
<path d="M512 468 L539 476 L546 506 L518 500 z" fill="#a8a8a8"/>
<path d="M516 472 L537 479 L541 498 L520 493 z" fill="#f0f0f4"/>
<path d="M520 506 L542 514 L542 529 L520 520 z" fill="#c01010"/>
<path d="M520 513 L542 521 L542 529 L520 520 z" fill="#8a0808"/>
<path d="M679 541 L723 556 L731 588 L685 573 z" fill="#a8a8a8"/>
<path d="M686 548 L722 560 L726 580 L690 568 z" fill="#f0f0f4"/>
<path d="M684 585 L718 601 L718 615 L684 598 z" fill="#c01010"/>
<path d="M684 592 L718 608 L718 615 L684 598 z" fill="#8a0808"/>
<path d="M563 484 L646 515 L655 577 L571 543 z" fill="#a3abab"/>
<path d="M570 493 L577 495.6 L582 543 L575 540 z" fill="#40474a"/>
<path d="M583.5 498.2 L590.5 500.8 L595.5 548.2 L588.5 545.2 z" fill="#40474a"/>
<path d="M597 503.4 L604 506 L609 553.4 L602 550.4 z" fill="#40474a"/>
<path d="M610.5 508.6 L617.5 511.2 L622.5 558.6 L615.5 555.6 z" fill="#40474a"/>
<path d="M624 513.8 L631 516.4 L636 563.8 L629 560.8 z" fill="#40474a"/>
<path d="M619 390 L646 372 L646 348 L830 386 L822 446 L810 442 z" fill="#2a2e33"/>
<path d="M693 330 L775 342 L779 344 L779 372 L693 360 z" fill="#34393f"/>
<path d="M779 344 L881 361 L878 384 L846 424 L836 410 L779 372 z" fill="#30353a"/>
<path d="M646 348 L737 363 L737 420 L646 395 z" fill="#3a4047"/>
<path d="M741 367 L852 387 L848 440 L822 446 L741 420 z" fill="#363b41"/>
<path d="M693 330 L775 342 L779 344 L779 372 L693 360 z" fill="url(#cob)"/>
<path d="M779 344 L881 361 L878 384 L846 424 L836 410 L779 372 z" fill="url(#cob)"/>
<path d="M646 348 L737 363 L737 420 L646 395 z" fill="url(#cob)"/>
<path d="M741 367 L852 387 L848 440 L822 446 L741 420 z" fill="url(#cob)"/>
<path d="M617 342 L830 384 L821 445 L617 391 z" fill="#3c4650" opacity=".35"/>
<path d="M718 392 L786 404 L789 436 L720 418 z" fill="#0c0e10" opacity=".75"/>
<path d="M774 326 L782 328 L780 346 L774 344 z" fill="#2c3036"/>
<path d="M692 316 L700 313 L781 327 L775 342 L693 330 z" fill="#9c9c9c"/>
<path d="M693 322 L776 335 L775 342 L693 330 z" fill="#848484"/>
<path d="M781 329 L788 327 L885 345 L881 361 L779 344 z" fill="#9c9c9c"/>
<path d="M780 337 L882 354 L881 361 L779 344 z" fill="#848484"/>
<path d="M645 334 L654 331 L739 350 L737 363 L646 348 z" fill="#a2a2a2"/>
<path d="M646 341 L738 357 L737 363 L646 348 z" fill="#8a8a8a"/>
<path d="M739 351 L746 349 L854 368 L852 387 L741 367 z" fill="#a2a2a2"/>
<path d="M740 359 L853 379 L852 387 L741 367 z" fill="#8a8a8a"/>
<path d="M648 384l5-2 0-4 5-2 0-4 5-2 0 5-5 2 0 4-5 2 0 4-5 2z" fill="#cfe3e8"/>
<path d="M680 394l5-2 0-4 5-2 0-4 5-2 0 5-5 2 0 4-5 2 0 4-5 2z" fill="#cfe3e8"/>
<path d="M713 404l5-2 0-4 5-2 0-4 5-2 0 5-5 2 0 4-5 2 0 4-5 2z" fill="#cfe3e8"/>
<path d="M750 410l5-2 0-4 5-2 0-4 5-2 0 5-5 2 0 4-5 2 0 4-5 2z" fill="#cfe3e8"/>
<path d="M620 376l5-2 0-4 5-2 0-4 5-2 0 5-5 2 0 4-5 2 0 4-5 2z" fill="#cfe3e8"/>
<path d="M814 424l3-1v8l-3 1z" fill="#cfe3e8"/>
<path d="M598 341 L602 336 L834 382 L830 390 z" fill="#4a4ad6"/>
<path d="M612 340 L617 341 L619 392 L614 392 z" fill="#4a4ad8"/>
<path d="M829 384 L834 383 L824 447 L819 445 z" fill="#3a3ad0"/>
<path d="M829 386 L852 387 L881 361 L885 372 L876 386 L822 450 L819 445 z" fill="#2e3338"/>
<path d="M542 456L543 449 545 443M551 436L556 432M560 428l1-1M580 410l1-1M585 406l1-1M591 401l1-1M608 401L633 406 657 413 675 420 692 426 716 430 740 432 742 436 745 450 747 468 747 506 742 518 735 523 719 521 703 515 692 512 666 502 640 498 622 493 605 484 587 477 570 470 552 465 542 456" fill="none" stroke="#000" stroke-width="1"/>
<path d="M542 456L543 449 545 443M551 436L556 432M560 428l1-1M580 410l1-1M585 406l1-1M591 401l1-1M608 401L633 406 657 413 675 420 692 426 716 430 740 432 742 436 745 450 747 468 747 506 742 518 735 523 719 521 703 515 692 512 666 502 640 498 622 493 605 484 587 477 570 470 552 465 542 456" fill="none" stroke="#fff" stroke-width="1" stroke-dasharray="4 4"/>
<path d="M594 467.500h22M605.500 456v22" stroke="#fff" stroke-width="1"/>
</svg>
<div class="a" style="left:223px;top:210px;width:712px;height:437px;border:1px dashed #000;outline:0"></div>
<svg class="a" style="left:223px;top:210px" width="713" height="438" viewBox="0 0 713 438"><rect x=".5" y=".5" width="711" height="436" fill="none" stroke="#ff0"/><rect x=".5" y=".5" width="711" height="436" fill="none" stroke="#000" stroke-dasharray="4 4"/></svg>
<svg class="a" style="left:946px;top:110px" width="12" height="12" viewBox="0 0 12 12"><rect x=".5" y=".5" width="10" height="10" fill="#fff" stroke="#204a87" stroke-dasharray="1 1"/><circle cx="5" cy="5" r="2.800" fill="#eee" stroke="#666"/><path d="M7 7l3.500 3.500" stroke="#555" stroke-width="1.600"/></svg>
<div class="a" style="left:944px;top:126px;width:15px;height:627px;background:#e6e4df;border:1px solid;border-color:#9a9892 #000 #000 #9a9892"></div>
<div class="btn" style="left:944px;top:126px;width:15px;height:15px"></div><svg class="a" style="left:947px;top:130px" width="9" height="6" viewBox="0 0 9 6"><path d="M0 6l4.500-6 4.500 6z"/></svg>
<div class="a" style="left:945px;top:141px;width:13px;height:11px;background:#c5c3be;border-bottom:1px solid #fff"></div>
<div class="btn" style="left:944px;top:738px;width:15px;height:15px"></div><svg class="a" style="left:947px;top:743px" width="9" height="6" viewBox="0 0 9 6"><path d="M0 0l4.500 6 4.500-6z"/></svg>
<div class="a" style="left:215px;top:754px;width:727px;height:15px;background:#e6e4df;border:1px solid;border-color:#9a9892 #000 #000 #9a9892"></div>
<div class="btn" style="left:215px;top:754px;width:15px;height:15px"></div><svg class="a" style="left:220px;top:757px" width="6" height="9" viewBox="0 0 6 9"><path d="M6 0l-6 4.500 6 4.500z"/></svg>
<div class="btn" style="left:927px;top:754px;width:15px;height:15px"></div><svg class="a" style="left:932px;top:757px" width="6" height="9" viewBox="0 0 6 9"><path d="M0 0l6 4.500-6 4.500z"/></svg>
<div class="a" style="left:199px;top:756px;width:11px;height:11px;border:1px dashed #999;background:#e4e2dd"></div>
<svg class="a" style="left:945px;top:754px" width="15" height="15" viewBox="0 0 15 15"><path d="M7.500 0l3 3.500h-2v3h3v-2l3.500 3-3.500 3v-2h-3v3h2l-3 3.500-3-3.500h2v-3h-3v2l-3.500-3 3.500-3v2h3v-3h-2z" fill="#2a5596"/></svg>
<div class="a" style="left:197px;top:772px;width:765px;height:1px;background:#000"></div>
<div class="a" style="left:197px;top:773px;width:1px;height:27px;background:#000"></div>
<div class="btn" style="left:289px;top:772px;width:50px;height:26px"></div><div class="t" style="left:295px;top:780px;font-size:11px">px</div><div class="a" style="left:319px;top:777px;width:1px;height:16px;background:#9a9892"></div><svg class="a" style="left:323px;top:782px" width="9" height="6" viewBox="0 0 9 6"><path d="M0 0l4.500 6 4.500-6z"/></svg>
<div class="a" style="left:342px;top:773px;width:52px;height:25px;background:#fff;border:1px solid;border-color:#000 #fff #fff #000"></div><div class="t" style="left:359px;top:780px;font-size:11px">100&#8202;%</div>
<div class="btn" style="left:394px;top:773px;width:16px;height:25px"></div><svg class="a" style="left:398px;top:782px" width="9" height="6" viewBox="0 0 9 6"><path d="M0 0l4.500 6 4.500-6z"/></svg>
<div class="t" style="left:413px;top:779px;font-size:12.800px">Pasted Layer (3.5 MB)</div>
<div class="a" style="left:964px;top:47px;width:2px;height:753px;background:#c9c7c2"></div>
<div class="a" style="left:969px;top:47px;width:1px;height:753px;background:#fff"></div>
<svg class="a" style="left:973px;top:60px" width="20" height="12" viewBox="0 0 20 12"><path d="M3 0h17v12H0z" fill="#fff" stroke="#aaa" stroke-width=".8"/><path d="M1 4h19M0 8h20" stroke="#bbb"/></svg>
<div class="t sm" style="left:973px;top:88px">Mode</div>
<div class="a" style="left:973px;top:108px;width:30px;height:30px;background:#b4c0ce;border:1px solid #000;box-shadow:inset 1px 1px 0 #fff"></div><div class="t sm" style="left:977px;top:118px">Opa</div>
<div class="t sm" style="left:973px;top:145px">Lock</div>
<div class="a" style="left:974px;top:167px;width:30px;height:264px;background:#fff;border:1px solid;border-color:#000 #fff #fff #000"></div>
<div class="a" style="left:975px;top:168px;width:30px;height:27px;background:#9a9892"></div>
<svg class="a" style="left:981px;top:176px" width="14" height="10" viewBox="0 0 14 10"><path d="M0 5q7-8 14 0-7 7-14 0z" fill="#fff"/><circle cx="8" cy="5" r="2.600" fill="#204a87"/></svg>
<svg class="a" style="left:965px;top:409px" width="4" height="36" viewBox="0 0 4 36"><rect x="0" y="0" width="2" height="2" fill="#000"/><rect x="0" y="4" width="2" height="2" fill="#000"/><rect x="0" y="9" width="2" height="2" fill="#000"/><rect x="0" y="13" width="2" height="2" fill="#000"/><rect x="0" y="18" width="2" height="2" fill="#000"/><rect x="0" y="23" width="2" height="2" fill="#000"/><rect x="0" y="27" width="2" height="2" fill="#000"/><rect x="0" y="32" width="2" height="2" fill="#000"/></svg>
<div class="a" style="left:986px;top:409px;width:12px;height:16px;background:#fff;border:1px solid #9a9892"></div>
<div class="a" style="left:969px;top:433px;width:30px;height:1px;background:#fff"></div>
<div class="a" style="left:972px;top:442px;width:30px;height:24px;background:radial-gradient(circle at 12px 11px,#000 0,#333 3px,#fff 9px);border:1px solid #000"></div>
<div class="a" style="left:974px;top:472px;width:30px;height:19px;background:#fff;border:1px solid;border-color:#000 #fff #fff #000"></div><div class="t sm" style="left:977px;top:476px;font-style:italic;color:#999">filter</div>
<div class="t sm" style="left:973px;top:494px;font-style:italic">2. Hardness</div>
<div class="a" style="left:974px;top:510px;width:30px;height:106px;background:#fff;border:1px solid;border-color:#000 #fff #fff #000"></div>
<svg class="a" style="left:975px;top:515px" width="20" height="95" viewBox="0 0 20 95"><path d="M2 8l8-6 10 2v8l-10 4-8-3z" fill="#2a2ad8"/><circle cx="14" cy="47" r="15" fill="#000"/><g fill="#222"><rect x="9" y="77" width="2" height="1"/><rect x="12" y="80" width="1" height="2"/><rect x="15" y="74" width="2" height="1"/><rect x="8" y="84" width="1" height="1"/><rect x="14" y="88" width="1" height="1"/></g></svg>
<div class="a" style="left:974px;top:616px;width:30px;height:100px;background:#fff"></div>
<svg class="a" style="left:978px;top:620px" width="16" height="100" viewBox="0 0 16 100"><g fill="#333"><rect x="2" y="6" width="9" height="9" fill="#555" opacity=".6"/><rect x="4" y="4" width="2" height="2"/><rect x="8" y="9" width="3" height="2"/><rect x="3" y="12" width="2" height="2"/><rect x="10" y="5" width="2" height="2"/><rect x="6" y="30" width="1" height="1"/><rect x="9" y="36" width="1" height="2"/><rect x="12" y="41" width="1" height="1"/><rect x="7" y="47" width="2" height="1"/><rect x="11" y="52" width="1" height="1"/><rect x="5" y="70" width="1" height="1"/><rect x="10" y="76" width="1" height="1"/><rect x="13" y="82" width="1" height="2"/><rect x="8" y="88" width="1" height="1"/><rect x="12" y="93" width="2" height="1"/></g></svg>
<div class="a" style="left:974px;top:720px;width:30px;height:19px;background:#fff;border:1px solid;border-color:#000 #fff #fff #000"></div><div class="t sm" style="left:978px;top:724px">Basic</div>
<div class="a" style="left:974px;top:743px;width:30px;height:28px;background:#fff;border:1px solid #000"></div><div class="a" style="left:975px;top:744px;width:10px;height:26px;background:#b4c0ce"></div><div class="t sm" style="left:977px;top:751px">Spac</div>
<div class="a" style="left:993px;top:776px;width:0;height:0"></div>
<div class="a" style="left:156px;top:58px;width:419px;height:342px;background:#dcdad5;border:1px solid #4a4e58"></div>
<div class="tb" style="left:157px;top:59px;width:417px;height:21px;border-top:1px solid #b7cdee;box-shadow:none"></div>
<div class="a" style="left:158px;top:395px;width:416px;height:1px;background:#8d8b86"></div><div class="a" style="left:158px;top:396px;width:416px;height:3px;background:linear-gradient(#e8e6e2,#fff 50%,#c9c7c2)"></div>
<div class="a" style="left:182px;top:396px;width:1px;height:3px;background:#777"></div><div class="a" style="left:548px;top:396px;width:1px;height:3px;background:#777"></div>
<svg class="a" style="left:160px;top:60px" width="18" height="17" viewBox="0 0 18 17"><path d="M2.500 8l1.500-5.500 2.500 3q3-1 5.500 0l4-4.500 .5 7.500q0 6-6 7-5 .5-7-3z" fill="#7a7468" stroke="#3a362f" stroke-width=".8"/><circle cx="6.500" cy="8" r="2" fill="#fff"/><circle cx="11" cy="7.500" r="2" fill="#fff"/><circle cx="7" cy="8.200" r=".9"/><circle cx="11.500" cy="7.800" r=".9"/><ellipse cx="3" cy="10.500" rx="2" ry="1.500" fill="#111"/></svg>
<div class="tbt" style="left:261px;top:62.500px;font-size:12px">Change Foreground Color</div>
<div class="wb" style="left:520px;top:62px"></div>
<div class="wb" style="left:538px;top:62px"></div>
<div class="wb" style="left:556px;top:62px"></div>
<svg class="a" style="left:519.500px;top:61.500px" width="51" height="15" viewBox="0 0 51 15"><path d="M4.500 10.500h5" stroke="#fff" stroke-width="2"/><rect x="22.500" y="4.500" width="5" height="5.500" fill="none" stroke="#fff" stroke-width="1.400"/><path d="M22 4.500h6" stroke="#fff" stroke-width="2"/><path d="M40.500 4.500l5 5.500m0-5.500l-5 5.500" stroke="#fff" stroke-width="2"/></svg>
<div class="a" style="left:170px;top:92px;width:30px;height:29px;border:1px solid;border-color:#fff #000 transparent #fff;background:#dcdad5"></div><div class="a" style="left:171px;top:94px;width:27px;height:26px;border:1px dotted #000"></div>
<div class="a" style="left:200px;top:95px;width:21px;height:25px;background:#cbc9c4;border:1px solid;border-color:#fff #000 #fff #dcdad5"></div>
<div class="a" style="left:221px;top:95px;width:26px;height:25px;background:#cbc9c4;border:1px solid;border-color:#fff #000 #fff #dcdad5"></div>
<div class="a" style="left:247px;top:95px;width:28px;height:25px;background:#cbc9c4;border:1px solid;border-color:#fff #000 #fff #dcdad5"></div>
<div class="a" style="left:275px;top:95px;width:26px;height:25px;background:#cbc9c4;border:1px solid;border-color:#fff #000 #fff #dcdad5"></div>
<div class="a" style="left:172px;top:120px;width:178px;height:1px;background:#fff"></div>
<svg class="a" style="left:174px;top:97px" width="22" height="21" viewBox="0 0 22 21"><path d="M3 9l1-5 3 2q4-1 7 0l5-5 .5 8q0 7-7 8-6 .5-8-4z" fill="#857e70" stroke="#3a362f" stroke-width=".9"/><circle cx="8" cy="9.500" r="2.400" fill="#fff"/><circle cx="13.500" cy="9" r="2.400" fill="#fff"/><circle cx="8.600" cy="9.800" r="1"/><circle cx="14" cy="9.300" r="1"/><ellipse cx="4" cy="12.500" rx="2.400" ry="1.800" fill="#111"/><path d="M9 14l9 4 2 2-3-1z" fill="#c17d11" stroke="#5a3a05" stroke-width=".5"/></svg>
<div class="a" style="left:201px;top:100px;width:17px;height:17px;border-radius:50%;background:conic-gradient(#f00,#ff0,#0f0,#0ff,#00f,#f0f,#f00)"></div><div class="a" style="left:203px;top:102px;width:13px;height:13px;border-radius:50%;background:#e9e7e3"></div><svg class="a" style="left:204px;top:103px" width="12" height="12" viewBox="0 0 12 12"><path d="M1.500 1l9.500 5-9.500 5z" fill="#e01010"/><path d="M1.500 1l4 5-4 5z" fill="#8a0000" opacity=".6"/></svg>
<svg class="a" style="left:223px;top:98px" width="21" height="21" viewBox="0 0 21 21"><rect x="5" y="1.500" width="10" height="8" fill="#fff" stroke="#aaa" stroke-width=".8"/><path d="M7 4h6M7 6h6" stroke="#ccc"/><rect x="1.500" y="9" width="17" height="9" rx="2" fill="#c8c8c6" stroke="#8a8a88"/><rect x="4" y="13.500" width="12" height="2" rx="1" fill="#f2f2f2" stroke="#9a9a98" stroke-width=".6"/></svg>
<svg class="a" style="left:248px;top:96px" width="24" height="24" viewBox="0 0 24 24"><path d="M20.500 1.500q1.500 1-1 5l-6 9.500-3-2 7-10q2-3.500 3-2.500z" fill="#c17d11" stroke="#8f5902" stroke-width=".7"/><path d="M10.500 14l3 2-2 3.500-3.500-2z" fill="#d3d7cf" stroke="#888" stroke-width=".6"/><path d="M8 17.500l3.500 2q-3 3-9 3 4-2 5.500-5z" fill="#111"/></svg>
<svg class="a" style="left:278px;top:99px" width="20" height="19" viewBox="0 0 20 19"><rect x=".5" y=".5" width="18" height="18" fill="#eee" stroke="#bbb"/><rect x="1" y="1" width="6" height="6" fill="#e03a3a"/><rect x="7" y="1" width="6" height="6" fill="#8fa8d8"/><rect x="13" y="1" width="5" height="6" fill="#f2d43a"/><rect x="1" y="7" width="6" height="5" fill="#c8a0c8"/><rect x="13" y="7" width="5" height="5" fill="#f0a050"/><rect x="1" y="12" width="6" height="6" fill="#e8e8e0"/><rect x="7" y="12" width="6" height="6" fill="#80c860"/><rect x="13" y="12" width="5" height="6" fill="#6890d0"/><path d="M8 7v-2q1-1.500 2 0v5l4 1v5h-6l-2-4q1-1 2 0z" fill="#f5c98a" stroke="#b0661a" stroke-width=".8"/></svg>
<div class="a" style="left:171px;top:121px;width:179px;height:165px;border:1px solid;border-color:#000 #fff #fff #000"></div>
<div class="a" style="left:172px;top:124px;width:152px;height:160px;background:linear-gradient(90deg,#000,rgba(0,0,0,.55) 35%,rgba(0,0,0,.2) 70%,rgba(0,0,0,0)),linear-gradient(#0000ff,#fff)"></div>
<div class="a" style="left:286px;top:123px;width:2px;height:161px;background:#777;border-left:1px solid #ddd"></div>
<div class="a" style="left:173px;top:161px;width:151px;height:2px;background:#999;border-top:1px solid #ddd"></div>
<div class="a" style="left:324px;top:123px;width:5px;height:161px;background:#dcdad5"></div>
<div class="a" style="left:330px;top:123px;width:17px;height:161px;border:1px solid #dcdad5;border-top-color:#000;border-left-color:#000;background:linear-gradient(#f00,#f0f 16.600%,#00f 33.300%,#0ff 50%,#0f0 66.600%,#ff0 83.300%,#f00)"></div>
<div class="a" style="left:330px;top:176px;width:17px;height:2px;background:#888;border-top:1px solid #ddd"></div>
<div class="t" style="left:169px;top:296px;font-size:12.500px">Current:</div><div class="t" style="left:196px;top:313px;font-size:12.500px">Old:</div>
<div class="a" style="left:227px;top:293px;width:123px;height:33px;background:#322fc3;border:1px solid;border-color:#000 #fff #fff #000"></div>
<div class="rd on" style="left:360px;top:97px"></div>
<div class="t" style="left:377px;top:99px;font-size:12.500px"><u>H</u></div>
<div class="a" style="left:391px;top:95px;width:115px;height:17px;background:#cbc9c4;border:1px solid;border-color:#9a9892 #fff #fff #9a9892"></div>
<div class="a" style="left:396px;top:98px;width:106px;height:11px;background:linear-gradient(90deg,#c22f2f,#c2c22f,#2fc22f,#2fc2c2,#2f2fc2,#c22fc2,#c22f2f)"></div>
<svg class="a" style="left:462px;top:97px" width="9" height="13" viewBox="0 0 9 13"><path d="M0 0h9l-4.500 4z" fill="#000"/><path d="M0 13h9l-4.500-4z" fill="#fff"/></svg>
<div class="a" style="left:511px;top:92px;width:51px;height:23px;background:#fff;border:1px solid;border-color:#000 #fff #fff #000;box-shadow:-1px -1px 0 #9a9892"></div>
<div class="t" style="left:515px;top:98px;font-size:12.500px">241</div>
<div class="btn" style="left:549px;top:93px;width:12px;height:11px;box-shadow:none;border-color:#fff #9a9892 #9a9892 #fff"></div><div class="btn" style="left:549px;top:104px;width:12px;height:10px;box-shadow:none;border-color:#fff #9a9892 #9a9892 #fff"></div>
<svg class="a" style="left:552px;top:96px" width="7" height="16" viewBox="0 0 7 16"><path d="M.5 4.500l3-3.500 3 3.500zM.5 11.500l3 3.500 3-3.500z"/></svg>
<div class="rd" style="left:360px;top:121px"></div>
<div class="t" style="left:377px;top:123px;font-size:12.500px"><u>S</u></div>
<div class="a" style="left:391px;top:119px;width:115px;height:17px;background:#cbc9c4;border:1px solid;border-color:#9a9892 #fff #fff #9a9892"></div>
<div class="a" style="left:396px;top:122px;width:106px;height:11px;background:linear-gradient(90deg,#c2c2c2,#0300c2)"></div>
<svg class="a" style="left:472px;top:121px" width="9" height="13" viewBox="0 0 9 13"><path d="M0 0h9l-4.500 4z" fill="#000"/><path d="M0 13h9l-4.500-4z" fill="#fff"/></svg>
<div class="a" style="left:511px;top:116px;width:51px;height:23px;background:#fff;border:1px solid;border-color:#000 #fff #fff #000;box-shadow:-1px -1px 0 #9a9892"></div>
<div class="t" style="left:515px;top:122px;font-size:12.500px">76</div>
<div class="btn" style="left:549px;top:117px;width:12px;height:11px;box-shadow:none;border-color:#fff #9a9892 #9a9892 #fff"></div><div class="btn" style="left:549px;top:128px;width:12px;height:10px;box-shadow:none;border-color:#fff #9a9892 #9a9892 #fff"></div>
<svg class="a" style="left:552px;top:120px" width="7" height="16" viewBox="0 0 7 16"><path d="M.5 4.500l3-3.500 3 3.500zM.5 11.500l3 3.500 3-3.500z"/></svg>
<div class="rd" style="left:360px;top:145px"></div>
<div class="t" style="left:377px;top:147px;font-size:12.500px"><u>V</u></div>
<div class="a" style="left:391px;top:143px;width:115px;height:17px;background:#cbc9c4;border:1px solid;border-color:#9a9892 #fff #fff #9a9892"></div>
<div class="a" style="left:396px;top:146px;width:106px;height:11px;background:linear-gradient(90deg,#000,#403dff)"></div>
<svg class="a" style="left:472px;top:145px" width="9" height="13" viewBox="0 0 9 13"><path d="M0 0h9l-4.500 4z" fill="#000"/><path d="M0 13h9l-4.500-4z" fill="#fff"/></svg>
<div class="a" style="left:511px;top:140px;width:51px;height:23px;background:#fff;border:1px solid;border-color:#000 #fff #fff #000;box-shadow:-1px -1px 0 #9a9892"></div>
<div class="t" style="left:515px;top:146px;font-size:12.500px">76</div>
<div class="btn" style="left:549px;top:141px;width:12px;height:11px;box-shadow:none;border-color:#fff #9a9892 #9a9892 #fff"></div><div class="btn" style="left:549px;top:152px;width:12px;height:10px;box-shadow:none;border-color:#fff #9a9892 #9a9892 #fff"></div>
<svg class="a" style="left:552px;top:144px" width="7" height="16" viewBox="0 0 7 16"><path d="M.5 4.500l3-3.500 3 3.500zM.5 11.500l3 3.500 3-3.500z"/></svg>
<div class="rd" style="left:360px;top:171px"></div>
<div class="t" style="left:377px;top:173px;font-size:12.500px"><u>R</u></div>
<div class="a" style="left:391px;top:169px;width:115px;height:17px;background:#cbc9c4;border:1px solid;border-color:#9a9892 #fff #fff #9a9892"></div>
<div class="a" style="left:396px;top:172px;width:106px;height:11px;background:linear-gradient(90deg,#002fc3,#ff2fc3)"></div>
<svg class="a" style="left:413px;top:171px" width="9" height="13" viewBox="0 0 9 13"><path d="M0 0h9l-4.500 4z" fill="#000"/><path d="M0 13h9l-4.500-4z" fill="#fff"/></svg>
<div class="a" style="left:511px;top:166px;width:51px;height:23px;background:#fff;border:1px solid;border-color:#000 #fff #fff #000;box-shadow:-1px -1px 0 #9a9892"></div>
<div class="t" style="left:515px;top:172px;font-size:12.500px">50</div>
<div class="btn" style="left:549px;top:167px;width:12px;height:11px;box-shadow:none;border-color:#fff #9a9892 #9a9892 #fff"></div><div class="btn" style="left:549px;top:178px;width:12px;height:10px;box-shadow:none;border-color:#fff #9a9892 #9a9892 #fff"></div>
<svg class="a" style="left:552px;top:170px" width="7" height="16" viewBox="0 0 7 16"><path d="M.5 4.500l3-3.500 3 3.500zM.5 11.500l3 3.500 3-3.500z"/></svg>
<div class="rd" style="left:360px;top:195px"></div>
<div class="t" style="left:377px;top:197px;font-size:12.500px"><u>G</u></div>
<div class="a" style="left:391px;top:193px;width:115px;height:17px;background:#cbc9c4;border:1px solid;border-color:#9a9892 #fff #fff #9a9892"></div>
<div class="a" style="left:396px;top:196px;width:106px;height:11px;background:linear-gradient(90deg,#3200c3,#32ffc3)"></div>
<svg class="a" style="left:411px;top:195px" width="9" height="13" viewBox="0 0 9 13"><path d="M0 0h9l-4.500 4z" fill="#000"/><path d="M0 13h9l-4.500-4z" fill="#fff"/></svg>
<div class="a" style="left:511px;top:190px;width:51px;height:23px;background:#fff;border:1px solid;border-color:#000 #fff #fff #000;box-shadow:-1px -1px 0 #9a9892"></div>
<div class="t" style="left:515px;top:196px;font-size:12.500px">47</div>
<div class="btn" style="left:549px;top:191px;width:12px;height:11px;box-shadow:none;border-color:#fff #9a9892 #9a9892 #fff"></div><div class="btn" style="left:549px;top:202px;width:12px;height:10px;box-shadow:none;border-color:#fff #9a9892 #9a9892 #fff"></div>
<svg class="a" style="left:552px;top:194px" width="7" height="16" viewBox="0 0 7 16"><path d="M.5 4.500l3-3.500 3 3.500zM.5 11.500l3 3.500 3-3.500z"/></svg>
<div class="rd" style="left:360px;top:219px"></div>
<div class="t" style="left:377px;top:221px;font-size:12.500px"><u>B</u></div>
<div class="a" style="left:391px;top:217px;width:115px;height:17px;background:#cbc9c4;border:1px solid;border-color:#9a9892 #fff #fff #9a9892"></div>
<div class="a" style="left:396px;top:220px;width:106px;height:11px;background:linear-gradient(90deg,#322f00,#322fff)"></div>
<svg class="a" style="left:472px;top:219px" width="9" height="13" viewBox="0 0 9 13"><path d="M0 0h9l-4.500 4z" fill="#000"/><path d="M0 13h9l-4.500-4z" fill="#fff"/></svg>
<div class="a" style="left:511px;top:214px;width:51px;height:23px;background:#fff;border:1px solid;border-color:#000 #fff #fff #000;box-shadow:-1px -1px 0 #9a9892"></div>
<div class="t" style="left:515px;top:220px;font-size:12.500px">195</div>
<div class="btn" style="left:549px;top:215px;width:12px;height:11px;box-shadow:none;border-color:#fff #9a9892 #9a9892 #fff"></div><div class="btn" style="left:549px;top:226px;width:12px;height:10px;box-shadow:none;border-color:#fff #9a9892 #9a9892 #fff"></div>
<svg class="a" style="left:552px;top:218px" width="7" height="16" viewBox="0 0 7 16"><path d="M.5 4.500l3-3.500 3 3.500zM.5 11.500l3 3.500 3-3.500z"/></svg>
<div class="t" style="left:357px;top:250px;font-size:12.500px">HTML <u>n</u>otation:</div>
<div class="a" style="left:459px;top:245px;width:71px;height:22px;background:#fff;border:1px solid;border-color:#000 #fff #fff #000;box-shadow:-1px -1px 0 #9a9892"></div><div class="t" style="left:463px;top:250px;font-size:12.500px">322fc3</div>
<div class="btn" style="left:536px;top:243px;width:26px;height:26px"></div><svg class="a" style="left:540px;top:246px" width="19" height="19" viewBox="0 0 19 19"><rect x="1.500" y="6.500" width="12" height="10" rx="1.500" fill="#e8e8e6" stroke="#666"/><rect x="3.500" y="8" width="8" height="5.500" fill="#3f73c0"/><path d="M9 8.500l5-5" stroke="#222" stroke-width="1.600"/><circle cx="15" cy="3" r="2" fill="#222"/><circle cx="15" cy="3" r=".8" fill="#c9a227"/></svg>
<div class="btn" style="left:356px;top:275px;width:27px;height:25px"></div><svg class="a" style="left:365px;top:282px" width="7" height="10" viewBox="0 0 7 10"><path d="M0 0l7 5-7 5z"/></svg>
<div class="btn" style="left:387px;top:275px;width:28px;height:25px"></div><div class="a" style="left:392px;top:280px;width:18px;height:15px;background:#9a9424"></div>
<div class="btn" style="left:387px;top:302px;width:28px;height:25px"></div><div class="a" style="left:392px;top:307px;width:18px;height:15px;background:#d4ddf4"></div>
<div class="btn" style="left:416px;top:275px;width:28px;height:25px"></div><div class="a" style="left:421px;top:280px;width:18px;height:15px;background:#000"></div>
<div class="btn" style="left:416px;top:302px;width:28px;height:25px"></div><div class="a" style="left:421px;top:307px;width:18px;height:15px;background:#fff"></div>
<div class="btn" style="left:445px;top:275px;width:28px;height:25px"></div><div class="a" style="left:450px;top:280px;width:18px;height:15px;background:#7a0c0c"></div>
<div class="btn" style="left:445px;top:302px;width:28px;height:25px"></div><div class="a" style="left:450px;top:307px;width:18px;height:15px;background:#fff"></div>
<div class="btn" style="left:474px;top:275px;width:28px;height:25px"></div><div class="a" style="left:479px;top:280px;width:18px;height:15px;background:#cf9a78"></div>
<div class="btn" style="left:474px;top:302px;width:28px;height:25px"></div><div class="a" style="left:479px;top:307px;width:18px;height:15px;background:#fff"></div>
<div class="btn" style="left:504px;top:275px;width:28px;height:25px"></div><div class="a" style="left:509px;top:280px;width:18px;height:15px;background:#b03030"></div>
<div class="btn" style="left:504px;top:302px;width:28px;height:25px"></div><div class="a" style="left:509px;top:307px;width:18px;height:15px;background:#fff"></div>
<div class="btn" style="left:534px;top:275px;width:28px;height:25px"></div><div class="a" style="left:539px;top:280px;width:18px;height:15px;background:#7ffbfb"></div>
<div class="btn" style="left:534px;top:302px;width:28px;height:25px"></div><div class="a" style="left:539px;top:307px;width:18px;height:15px;background:#fff"></div>
<div class="btn" style="left:169px;top:351px;width:86px;height:32px"></div>
<svg class="a" style="left:188px;top:358px" width="18" height="18" viewBox="0 0 18 18"><circle cx="9" cy="9" r="6" fill="none" stroke="#fff" stroke-width="4.500"/><circle cx="9" cy="9" r="6" fill="none" stroke="#e02020" stroke-width="4.500" stroke-dasharray="4.710 4.710" stroke-dashoffset="2.300"/><circle cx="9" cy="9" r="8.300" fill="none" stroke="#999" stroke-width=".6"/><circle cx="9" cy="9" r="3.700" fill="none" stroke="#999" stroke-width=".6"/></svg>
<div class="t" style="left:208px;top:361px;font-size:12.500px"><u>H</u>elp</div>
<div class="btn" style="left:295px;top:351px;width:86px;height:32px"></div>
<svg class="a" style="left:310px;top:358px" width="18" height="18" viewBox="0 0 18 18"><path d="M5 3.500h9q2 0 2 2v7q0 2-2 2H8.500v-2.500h5v-6H5v2.500L1.500 5 5 1z" fill="#f5d328" stroke="#b89a10" stroke-width=".8"/><circle cx="4.500" cy="14" r="2.600" fill="#3f73c0" stroke="#244a85" stroke-width=".6"/></svg>
<div class="t" style="left:329px;top:361px;font-size:12.500px"><u>R</u>eset</div>
<div class="btn" style="left:386px;top:351px;width:86px;height:32px"></div>
<svg class="a" style="left:398px;top:358px" width="18" height="18" viewBox="0 0 18 18"><path d="M3 2l6 5.500 5-6 2.500 1.500-5 6.500 5.500 6-2.500 2-5.500-5.500-5 6-2.500-2 5-6-5.500-5.500z" fill="#f04a4a" stroke="#a40000" stroke-width=".8"/></svg>
<div class="t" style="left:418px;top:361px;font-size:12.500px"><u>C</u>ancel</div>
<div class="a" style="left:476px;top:350px;width:87px;height:34px;border:1px solid #000"></div><div class="btn" style="left:477px;top:351px;width:85px;height:32px"></div>
<svg class="a" style="left:498px;top:357px" width="22" height="19" viewBox="0 0 22 19"><path d="M12 1.500h8.500v10h-11v4.500L1.500 10l8-6v4h2.500z" fill="#8fb5e2" stroke="#3465a4" stroke-width="1"/></svg>
<div class="t" style="left:521px;top:361px;font-size:12.500px"><u>O</u>K</div>
</div>
<!-- ======================= FIREFOX WINDOW ======================= -->
<div id="ff" class="a">
<div class="a" style="left:0;top:0;width:286px;height:1px;background:#555;z-index:3"></div><div class="a" style="left:286px;top:0;width:401px;height:1px;background:#e0e0e0;z-index:3"></div>
<div class="tb" style="left:0;top:0;width:687px;height:23px"></div>
<div class="tbt" style="left:18px;top:6px;font-size:12px">Blue - Wikipedia, the free encyclopedia - Mozilla Firefox</div>
<div class="wb" style="left:631px;top:5px"></div>
<div class="wb" style="left:649px;top:5px"></div>
<div class="wb" style="left:667px;top:5px"></div>
<svg class="a" style="left:630.5px;top:4.500px" width="51" height="15" viewBox="0 0 51 15"><path d="M4.500 10.500h5" stroke="#fff" stroke-width="2"/><rect x="22.500" y="4.500" width="5" height="5.500" fill="none" stroke="#fff" stroke-width="1.400"/><path d="M22 4.500h6" stroke="#fff" stroke-width="2"/><path d="M40.500 4.500l5 5.500m0-5.500l-5 5.500" stroke="#fff" stroke-width="2"/></svg>
<div class="a" style="left:0;top:23px;width:687px;height:30px;background:#dcdad5;border-bottom:1px solid #a6a49f"></div>
<div class="a" style="left:0;top:53px;width:687px;height:41px;background:#edebe7;border-bottom:1px solid #c9c7c2"></div>
<svg class="a" style="left:332px;top:24px" width="176" height="30" viewBox="0 0 176 30"><path d="M0 29.500C10 29.500 10 26 13 17C16 6 18 .5 30 .5H146C158 .5 160 6 163 17C166 26 166 29.500 176 29.500" fill="#edebe7" stroke="#a6a49f"/><path d="M0 29h176v1H0z" fill="#edebe7"/></svg>
<div class="a" style="left:62px;top:28px;width:1px;height:21px;background:#b9b7b2"></div>
<div class="a" style="left:205px;top:28px;width:1px;height:21px;background:#b9b7b2"></div>
<div class="a" style="left:633px;top:28px;width:1px;height:21px;background:#b9b7b2"></div>
<div class="t" style="left:-17px;top:32px;font-size:13px">Imag...</div>
<svg class="a" style="left:43px;top:34px" width="10" height="10" viewBox="0 0 10 10"><path d="M1.500 1.500l7 7m0-7l-7 7" stroke="#1a1a1a" stroke-width="2.200"/></svg>
<svg class="a" style="left:74px;top:31px" width="17" height="17" viewBox="0 0 17 17"><path d="M1 8l7-4 8 4v4l-8 4.500-7-4.500z" fill="#c9a25a" stroke="#5c4a2a" stroke-width=".7"/><path d="M1 8l7-4 8 4-8 4.500z" fill="#5fae3a"/><path d="M6 10l4-2 4 2-4 2.500z" fill="#5b8fd6"/><circle cx="5.500" cy="5" r="3" fill="#3d8a2a"/><circle cx="7.500" cy="3.500" r="2" fill="#4fa53a"/><path d="M11 5l2-1 1 2-2 1z" fill="#f0d040"/><rect x="2" y="10" width="3" height="3" fill="#444"/></svg>
<div class="t" style="left:94px;top:32px;font-size:13px">View new ...</div>
<svg class="a" style="left:186px;top:34px" width="10" height="10" viewBox="0 0 10 10"><path d="M1.500 1.500l7 7m0-7l-7 7" stroke="#1a1a1a" stroke-width="2.200"/></svg>
<svg class="a" style="left:216px;top:31px" width="17" height="17" viewBox="0 0 17 17"><path d="M1 8l7-4 8 4v4l-8 4.500-7-4.500z" fill="#c9a25a" stroke="#5c4a2a" stroke-width=".7"/><path d="M1 8l7-4 8 4-8 4.500z" fill="#5fae3a"/><path d="M6 10l4-2 4 2-4 2.500z" fill="#5b8fd6"/><circle cx="5.500" cy="5" r="3" fill="#3d8a2a"/><circle cx="7.500" cy="3.500" r="2" fill="#4fa53a"/><path d="M11 5l2-1 1 2-2 1z" fill="#f0d040"/><rect x="2" y="10" width="3" height="3" fill="#444"/></svg>
<div class="t" style="left:237px;top:32px;font-size:13px">Post your ...</div>
<svg class="a" style="left:328px;top:34px" width="10" height="10" viewBox="0 0 10 10"><path d="M1.500 1.500l7 7m0-7l-7 7" stroke="#1a1a1a" stroke-width="2.200"/></svg>
<div class="a" style="left:357px;top:30px;width:17px;height:17px;background:#fff;border-radius:4px"></div><div class="t" style="left:359px;top:31px;font-family:'Liberation Serif','DejaVu Serif',serif;font-size:15px;color:#222;letter-spacing:-1px">W</div>
<div class="t" style="left:379px;top:32px;font-size:13px">Blue - Wiki...</div>
<svg class="a" style="left:471px;top:34px" width="10" height="10" viewBox="0 0 10 10"><path d="M1.500 1.500l7 7m0-7l-7 7" stroke="#1a1a1a" stroke-width="2.200"/></svg>
<div class="a" style="left:500px;top:30px;width:17px;height:17px;background:#fff;border-radius:4px"></div><div class="t" style="left:502px;top:31px;font-family:'Liberation Serif','DejaVu Serif',serif;font-size:15px;color:#222;letter-spacing:-1px">W</div>
<div class="t" style="left:522px;top:32px;font-size:13px">Purple - Wi...</div>
<svg class="a" style="left:614px;top:34px" width="10" height="10" viewBox="0 0 10 10"><path d="M1.500 1.500l7 7m0-7l-7 7" stroke="#1a1a1a" stroke-width="2.200"/></svg>
<svg class="a" style="left:644px;top:30px" width="16" height="16" viewBox="0 0 16 16"><path d="M6 1h4v5h5v4h-5v5h-4v-5h-5v-4h5z" fill="#cfe0f5" stroke="#3465a4" stroke-width="1.200"/></svg>
<div class="a" style="left:-10px;top:61px;width:418px;height:24px;background:#fff;border:1px solid #aaa8a3;border-radius:2px"></div>
<div class="t" style="left:1px;top:67px;font-size:13px;color:#8a8a8a">/wiki/Blue</div>
<svg class="a" style="left:349px;top:66px" width="18" height="14" viewBox="0 0 18 14"><path d="M1.500 1.500h6l1.500 1 1.500-1h6v10h-6l-1.500 1.500-1.500-1.500h-6z" fill="none" stroke="#8a8a8a" stroke-width="1.500"/><path d="M3.500 4.500h3M3.500 6.500h3M3.500 8.500h3" stroke="#8a8a8a"/></svg>
<div class="a" style="left:375px;top:65px;width:1px;height:16px;background:#c8c6c1"></div>
<svg class="a" style="left:384px;top:65px" width="15" height="15" viewBox="0 0 15 15"><path d="M11.500 9.500a4.500 4.500 0 1 1-1-5" fill="none" stroke="#8a97a8" stroke-width="2"/><path d="M8 5.500l5-.5-.5-4.500z" fill="#8a97a8"/></svg>
<svg class="a" style="left:422px;top:64px" width="18" height="18" viewBox="0 0 18 18"><circle cx="9" cy="9" r="7" fill="none" stroke="#3a3a3a" stroke-width="2.200"/><path d="M9 4.500v5l3 2" fill="none" stroke="#3a3a3a" stroke-width="1.800"/></svg>
<svg class="a" style="left:460px;top:64px" width="18" height="18" viewBox="0 0 18 18"><path d="M6 1h6v7h4.500l-7.500 8.500-7.500-8.500h4.500z" fill="#4a4a4a"/></svg>
<svg class="a" style="left:498px;top:64px" width="18" height="18" viewBox="0 0 18 18"><path d="M9 1.500l8 7.500h-2.500v7.500h-4v-5h-3v5h-4v-7.500h-2.500z" fill="#4a4a4a"/><path d="M2 9l7-6.500 7 6.500" fill="none" stroke="#edebe7" stroke-width="1"/></svg>
<div class="a" style="left:536px;top:64px;width:18px;height:18px;background:#000"></div><div class="t" style="left:539px;top:65px;font-size:17px;color:#fff;font-family:'Liberation Sans',sans-serif">A</div>
<svg class="a" style="left:573px;top:63px" width="20" height="20" viewBox="0 0 20 20"><circle cx="10" cy="10" r="8" fill="#fff" stroke="#d01010" stroke-width="2.400"/><text x="10" y="15" font-size="14" font-weight="bold" text-anchor="middle" fill="#2a3a9a" font-family="Liberation Sans,sans-serif">S</text><path d="M4.500 4.500l11 11" stroke="#d01010" stroke-width="2.200"/></svg>
<svg class="a" style="left:610px;top:66px" width="20" height="16" viewBox="0 0 20 16"><path d="M1 9l8-7 9 6-6 7-9-1z" fill="#fff" stroke="#d08a30" stroke-width="1.200"/><path d="M4 9l5-4 6 4-4 4z" fill="#222"/></svg>
<div class="a" style="left:623px;top:59px;width:15px;height:12px;background:#f03a3a;border-radius:2px"></div><div class="t" style="left:627px;top:60px;font-size:10px;color:#fff">2</div>
<div class="a" style="left:642px;top:57px;width:1px;height:32px;background:#d5d3ce"></div>
<svg class="a" style="left:655px;top:65px" width="18" height="16" viewBox="0 0 18 16"><path d="M1.500 2.500h15M1.500 8h15M1.500 13.500h15" stroke="#3a3a3a" stroke-width="2.600" stroke-linecap="round"/></svg>
<div class="t wk" style="left:-59.600px;top:87.7px;line-height:28.800px;height:28.800px"><b>Blue</b> is the <a>colour</a> between</div>
<div class="t wk" style="left:-59.600px;top:116.5px;line-height:28.800px;height:28.800px"><a>violet</a> and <a>green</a> on the <a>optical</a></div>
<div class="t wk" style="left:-59.600px;top:145.3px;line-height:28.800px;height:28.800px"><a>spectrum</a> of <a>visible light</a>.</div>
<div class="t wk" style="left:-59.600px;top:174.0px;line-height:28.800px;height:28.800px"><a>Human eyes</a> perceive blue</div>
<div class="t wk" style="left:-59.600px;top:202.8px;line-height:28.800px;height:28.800px">when observing light with a</div>
<div class="t wk" style="left:-59.600px;top:231.6px;line-height:28.800px;height:28.800px"><a>wavelength</a> between 450 and</div>
<div class="t wk" style="left:-59.600px;top:260.4px;line-height:28.800px;height:28.800px">495 <a>nanometres</a>. Blues with a</div>
<div class="t wk" style="left:-59.600px;top:289.2px;line-height:28.800px;height:28.800px">higher frequency and thus a</div>
<div class="t wk" style="left:-59.600px;top:317.9px;line-height:28.800px;height:28.800px">shorter wavelength gradually</div>
<div class="t wk" style="left:-59.600px;top:346.7px;line-height:28.800px;height:28.800px">look more violet, while those</div>
<div class="t wk" style="left:-59.600px;top:375.5px;line-height:28.800px;height:28.800px">with a lower frequency and a</div>
<div class="t wk" style="left:-59.600px;top:404.3px;line-height:28.800px;height:28.800px">longer wavelength gradually</div>
<div class="t wk" style="left:-59.600px;top:433.1px;line-height:28.800px;height:28.800px">appear more green. Pure blue,</div>
<div class="t wk" style="left:-59.600px;top:461.8px;line-height:28.800px;height:28.800px">in the middle, has a</div>
<div class="t wk" style="left:-59.600px;top:490.6px;line-height:28.800px;height:28.800px">wavelength of 470</div>
<div class="t wk" style="left:-59.600px;top:519.4px;line-height:28.800px;height:28.800px">nanometres. In painting and</div>
<div class="t wk" style="left:-59.600px;top:548.2px;line-height:28.800px;height:28.800px">traditional <a>colour theory</a>, blue</div>
<div class="t wk" style="left:-59.600px;top:577.0px;line-height:28.800px;height:28.800px">is one of the three <a>primary</a></div>
<div class="t wk" style="left:-59.600px;top:605.7px;line-height:28.800px;height:28.800px"><a>colours</a> of pigments, along</div>
<div class="t wk" style="left:-59.600px;top:634.5px;line-height:28.800px;height:28.800px">with red and yellow, which</div>
<div class="t wk" style="left:-59.600px;top:663.3px;line-height:28.800px;height:28.800px">can be mixed to form a wide</div>
<div class="t wk" style="left:-59.600px;top:692.1px;line-height:28.800px;height:28.800px"><a>gamut</a> of colours. Red and</div>
<div class="t wk" style="left:-59.600px;top:720.9px;line-height:28.800px;height:28.800px">blue mixed together form</div>
<div class="t wk" style="left:-59.600px;top:749.6px;line-height:28.800px;height:28.800px">violet, blue and yellow</div>
<div class="a" style="left:233px;top:96px;width:396px;height:674px;border:1px solid #a2a2a2"></div>
<div class="t ib" style="left:233px;top:110px;width:396px;text-align:center;font-weight:bold;font-size:18px">Blue</div>
<div class="a" style="left:242px;top:137px;width:378px;height:20px;background:#0000ff"></div>
<svg class="a" style="left:242px;top:161px" width="247" height="309" viewBox="1235 161 247 309">
<defs>
<radialGradient id="star" cx=".48" cy=".5" r=".5"><stop offset="0" stop-color="#fff4f4"/><stop offset=".1" stop-color="#f8c0c4"/><stop offset=".17" stop-color="#e08890"/><stop offset=".26" stop-color="#3a8a98"/><stop offset=".42" stop-color="#12444a"/><stop offset=".6" stop-color="#061a1c"/><stop offset="1" stop-color="#020606"/></radialGradient>
<radialGradient id="earth" cx=".45" cy=".4" r=".6"><stop offset="0" stop-color="#8fa8c8"/><stop offset=".5" stop-color="#3a5a98"/><stop offset="1" stop-color="#0a1a50"/></radialGradient>
<linearGradient id="ssky" x1="0" y1="0" x2="0" y2="1"><stop offset="0" stop-color="#2a68cc"/><stop offset=".6" stop-color="#5a98e6"/><stop offset="1" stop-color="#cfe4f8"/></linearGradient>
<linearGradient id="sea" x1="0" y1="0" x2="0" y2="1"><stop offset="0" stop-color="#4a78c8"/><stop offset=".15" stop-color="#2448a8"/><stop offset=".6" stop-color="#142c88"/><stop offset="1" stop-color="#0a1660"/></linearGradient>
<linearGradient id="bird" x1="0" y1="0" x2="1" y2="0"><stop offset="0" stop-color="#4a4e3a"/><stop offset=".6" stop-color="#3e4232"/><stop offset="1" stop-color="#5a6038"/></linearGradient>
<pattern id="tile" width="5" height="5" patternUnits="userSpaceOnUse"><rect width="5" height="5" fill="#2c3cb4"/><rect x="1" y="1" width="2" height="2" fill="#6f84d4"/><rect x="3" y="3" width="1.500" height="1.500" fill="#b8a868"/></pattern>
<pattern id="grid" width="3" height="3" patternUnits="userSpaceOnUse"><rect width="3" height="3" fill="#55585e"/><rect x=".5" y=".5" width="1.500" height="1.500" fill="#c8ccd0"/></pattern>
</defs>
<rect x="1235.500" y="161.500" width="246" height="308" fill="#000" stroke="#a8a8a8"/>
<rect x="1237" y="163" width="80" height="107" fill="#969694"/>
<rect x="1237" y="163" width="62" height="23" fill="#e4e2d6"/>
<rect x="1237" y="163" width="6" height="23" fill="#c8b48c"/>
<rect x="1256" y="163" width="14" height="14" fill="#cfcdc4"/>
<rect x="1271" y="163" width="3" height="38" fill="#f0f0ec"/>
<rect x="1276" y="163" width="12" height="16" fill="#8a6f68"/>
<rect x="1290" y="163" width="8" height="24" fill="#d8d0b0"/>
<rect x="1299" y="163" width="18" height="35" fill="#2c302c"/>
<rect x="1237" y="181" width="14" height="4" fill="#6a9a78"/>
<rect x="1237" y="186" width="62" height="12" fill="#a89c86"/>
<rect x="1252" y="188" width="18" height="9" fill="#8a8476"/>
<rect x="1237" y="198" width="80" height="5" fill="#c8c4ba"/>
<rect x="1237" y="203" width="80" height="28" fill="#9a9a9a"/>
<rect x="1237" y="212" width="28" height="3" fill="#c4c4c4"/><rect x="1237" y="222" width="22" height="3" fill="#bcbcbc"/><rect x="1300" y="226" width="17" height="3" fill="#c0c0c0"/>
<rect x="1237" y="231" width="80" height="39" fill="#585858"/>
<rect x="1237" y="250" width="80" height="20" fill="#3c3c3c"/>
<path d="M1237 234h80" stroke="#0c0c0c" stroke-width="2.600"/>
<path d="M1239 238q10 2 8 16l8 14M1262 236q-10 10-2 22M1314 238q-10 4-8 18v10M1300 238q8 8 4 22" stroke="#0c0c0c" stroke-width="1.700" fill="none"/>
<path d="M1247 177 L1252 177 L1253 186 L1250 192 L1252 200 L1248 200 L1246 192 L1242 200 L1240 199 L1245 188 z" fill="#3a3e46"/>
<circle cx="1250" cy="174" r="2.300" fill="#2a2a2a"/>
<path d="M1266 206 L1278 200 L1292 200 L1300 207 L1302 222 L1300 240 L1296 254 L1264 254 L1262 250 L1259 236 L1261 216 z" fill="#6e98d8"/>
<path d="M1261 216 L1266 206 L1272 204 L1270 240 L1266 252 L1262 250 L1259 236 z" fill="#5a86c8"/>
<path d="M1290 204 L1300 207 L1302 222 L1300 240 L1296 250 L1292 232 z" fill="#7aa4e0"/>
<path d="M1264 253 L1297 252 L1297 270 L1264 270 z" fill="#14161e"/>
<path d="M1279 202 L1284 202 L1280 226 L1274 231 L1271 226 z" fill="#15171c"/>
<ellipse cx="1285.500" cy="192" rx="7" ry="9" fill="#cf9c74"/>
<path d="M1278 184 L1282 182 L1281 200 L1278 198 z" fill="#a87840"/>
<path d="M1291 186 L1293 188 L1292 197 L1290 198 z" fill="#a87840"/>
<path d="M1272 186 L1276 176 L1281 172 L1290 172 L1294 177 L1297 184 L1294 187 L1285 185 L1275 189 z" fill="#17191e"/>
<ellipse cx="1285" cy="176" rx="3" ry="2.400" fill="#9aa0a8"/>
<circle cx="1297.500" cy="217" r="3" fill="#d0d2dc" stroke="#2a2e44" stroke-width=".9"/>
<path d="M1265 251 L1274 249 L1278 256 L1270 260 z" fill="#c89870"/>
<rect x="1318" y="163" width="80" height="116" fill="url(#tile)"/>
<rect x="1318" y="163" width="80" height="4" fill="#c8b898"/>
<rect x="1318" y="186" width="80" height="3" fill="#b8c0d0"/><rect x="1318" y="167" width="80" height="2.500" fill="#9ab0d8"/>
<rect x="1335" y="189" width="3" height="90" fill="#c0b080"/><rect x="1318" y="189" width="2" height="90" fill="#6aa0c8"/>
<path d="M1340 279v-62q4-16 27-25 23 9 27 25v62" fill="none" stroke="#cdbf98" stroke-width="2.500"/>
<path d="M1344 279v-58q4-12 23-20 19 8 23 20v58z" fill="#2232b0" opacity=".55"/>
<path d="M1354 279v-52q0-8 13-16 13 8 13 16v52z" fill="#9aa4c8"/>
<path d="M1358 243v-18q0-6 9-11 9 5 9 11v18z" fill="url(#grid)"/>
<rect x="1358" y="252" width="18" height="27" fill="url(#grid)"/>
<rect x="1354" y="244" width="26" height="7" fill="#8f9ac4"/>
<circle cx="1367" cy="204" r="3" fill="#a8b0d0"/>
<rect x="1399" y="163" width="80" height="120" fill="url(#bird)"/>
<path d="M1399 216l80 60v7h-8l-72-58z" fill="#b8956a"/><path d="M1399 216l80 60" stroke="#d8b890" stroke-width="1.500"/>
<path d="M1428 264 L1433 262 L1436 276 L1431 277 z" fill="#9a9ca0"/>
<path d="M1443 262 L1448 262 L1452 280 L1446 281 z" fill="#8a8c92"/>
<path d="M1420 188q-4 24 0 42 6 20 24 22 10 2 12-4 2-18-6-44-4-14-8-18z" fill="#1e62d0"/>
<path d="M1424 206q-2 18 4 30 8 10 16 8 2-20-4-38z" fill="#4a86e0" opacity=".8"/>
<path d="M1440 200q10 16 14 34 2 14-2 24l-8 4q6-20-2-40-4-12-6-18z" fill="#1a1c22"/>
<circle cx="1430" cy="187" r="10" fill="#1a5ccc"/>
<path d="M1424 180q6-4 14 0l-2 5q-6-3-12 0z" fill="#8ad8d0"/>
<path d="M1422 186l14-1 2 5-10 2z" fill="#15171c"/>
<path d="M1407 175l16 6-2 4z" fill="#15171c"/>
<circle cx="1430" cy="244" r="2" fill="#e05040"/>
<rect x="1237" y="284" width="80" height="81" fill="#020606"/>
<ellipse cx="1276" cy="324" rx="36" ry="36" fill="url(#star)"/>
<ellipse cx="1296" cy="316" rx="7" ry="9" fill="#a060a0" opacity=".35"/><ellipse cx="1263" cy="330" rx="8" ry="7" fill="#802020" opacity=".35"/>
<rect x="1318" y="284" width="80" height="81" fill="#000"/>
<circle cx="1358" cy="324" r="35" fill="url(#earth)"/>
<path d="M1350 300q8-6 16-2 6 6 2 14l6 10q-4 8-10 6l-4-10q-8-4-12-10z" fill="#6a7a4a"/>
<path d="M1330 316q10-6 20-2t16-6M1332 334q12 6 24 0t22-2M1338 348q12 4 22-2M1342 300q10 2 18-4M1372 316q8 6 16 2" stroke="#e8eef8" stroke-width="3" fill="none" opacity=".8"/>
<rect x="1399" y="284" width="80" height="82" fill="#e9e9ea"/>
<ellipse cx="1440" cy="356" rx="34" ry="6" fill="#c8c8cc"/>
<path d="M1418 288 L1428 284 L1446 300 L1438 330 L1414 322 z" fill="#1e5af0"/>
<path d="M1403 318 L1432 314 L1458 322 L1452 356 L1420 352 L1402 340 z" fill="#2a66f4"/>
<path d="M1436 312 L1462 308 L1478 348 L1456 358 L1438 344 z" fill="#1a50e8"/>
<path d="M1403 318 L1414 316 L1424 350 L1410 346 z" fill="#5a8ef8"/>
<path d="M1418 288 L1424 286 L1432 318 L1424 320 z" fill="#4a80f8"/>
<path d="M1456 322 L1468 326 L1474 348 L1458 352 z" fill="#3a74f6"/>
<path d="M1408 336 L1420 332 L1428 350 L1416 354 z" fill="#6a9afa"/>
<rect x="1237" y="367" width="243" height="47" fill="url(#ssky)"/>
<rect x="1237" y="413" width="243" height="55" fill="url(#sea)"/>
<g fill="#fff">
<ellipse cx="1242" cy="376" rx="6" ry="8"/>
<ellipse cx="1250" cy="392" rx="10" ry="10"/>
<ellipse cx="1266" cy="398" rx="12" ry="8"/>
<ellipse cx="1290" cy="392" rx="10" ry="8"/>
<ellipse cx="1300" cy="398" rx="12" ry="7"/>
<ellipse cx="1312" cy="390" rx="9" ry="8"/>
<ellipse cx="1330" cy="400" rx="14" ry="6"/>
<ellipse cx="1356" cy="388" rx="10" ry="8"/>
<ellipse cx="1368" cy="394" rx="12" ry="9"/>
<ellipse cx="1384" cy="398" rx="14" ry="7"/>
<ellipse cx="1400" cy="402" rx="12" ry="5"/>
<ellipse cx="1424" cy="402" rx="14" ry="4"/>
<ellipse cx="1456" cy="400" rx="10" ry="5"/>
<ellipse cx="1470" cy="404" rx="10" ry="4"/>
<ellipse cx="1244" cy="404" rx="10" ry="5"/>
</g>
<g fill="#f4f8ff" opacity=".9"><ellipse cx="1392" cy="373" rx="4" ry="3"/><ellipse cx="1414" cy="376" rx="5" ry="2.500"/><ellipse cx="1462" cy="372" rx="9" ry="4"/><ellipse cx="1372" cy="372" rx="6" ry="2"/><ellipse cx="1468" cy="389" rx="5" ry="2"/></g>
<rect x="1237" y="406" width="243" height="8" fill="#e4eefa" opacity=".75"/>
<path d="M1244 413l4-4q14-6 26-1l8 5z" fill="#3a8a2a"/><path d="M1445 413l2-5q14-6 28-1l3 6z" fill="#2a6a22"/>
<ellipse cx="1350" cy="428" rx="70" ry="8" fill="#6a90d8" opacity=".45"/><ellipse cx="1340" cy="444" rx="50" ry="6" fill="#5078c8" opacity=".3"/>
<path d="M1250 424q20 -2 40 0" stroke="#7fa0e0" stroke-width="1.200" fill="none" opacity=".6"/>
<path d="M1300 420q30 -2 60 0" stroke="#7fa0e0" stroke-width="1.200" fill="none" opacity=".6"/>
<path d="M1380 424q25 -2 50 0" stroke="#7fa0e0" stroke-width="1.200" fill="none" opacity=".6"/>
<path d="M1260 436q25 -2 50 0" stroke="#7fa0e0" stroke-width="1.200" fill="none" opacity=".6"/>
<path d="M1340 434q35 -2 70 0" stroke="#7fa0e0" stroke-width="1.200" fill="none" opacity=".6"/>
<path d="M1420 438q20 -2 40 0" stroke="#7fa0e0" stroke-width="1.200" fill="none" opacity=".6"/>
<path d="M1280 450q30 -2 60 0" stroke="#7fa0e0" stroke-width="1.200" fill="none" opacity=".6"/>
<path d="M1370 452q30 -2 60 0" stroke="#7fa0e0" stroke-width="1.200" fill="none" opacity=".6"/>
<path d="M1246 460q20 -2 40 0" stroke="#7fa0e0" stroke-width="1.200" fill="none" opacity=".6"/>
<path d="M1330 462q25 -2 50 0" stroke="#7fa0e0" stroke-width="1.200" fill="none" opacity=".6"/>
<path d="M1430 456q20 -2 40 0" stroke="#7fa0e0" stroke-width="1.200" fill="none" opacity=".6"/>
</svg>
<div class="t ib" style="left:233px;top:479.8px;width:395px;text-align:center;font-weight:bold;color:#6dbdf5">Spectral coordinates</div>
<div class="t ib" style="left:242px;top:511.9px;font-weight:bold;color:#6dbdf5">Wavelength</div>
<div class="t ib" style="left:424px;top:511.9px">450–495 <span class="lk">nm</span></div>
<div class="t ib" style="left:242px;top:544.0px;font-weight:bold;color:#6dbdf5">Frequency</div>
<div class="t ib" style="left:424px;top:544.0px">~670–610 <span class="lk">THz</span></div>
<div class="t ib" style="left:233px;top:576.1px;width:395px;text-align:center;font-weight:bold;color:#fff">&nbsp;Colour coordinates</div>
<div class="t ib" style="left:242px;top:608.2px;font-weight:bold;color:#6dbdf5">Hex triplet</div>
<div class="t ib" style="left:424px;top:608.2px">#0000FF</div>
<div class="t ib" style="left:242px;top:641.3px;font-weight:bold;color:#6dbdf5">sRGB<sup style="color:#fff;font-size:16px;vertical-align:6px;line-height:0">B</sup><span style="color:#fff">&nbsp; (<span class="lk">r</span>, <span class="lk">g</span>, <span class="lk">b</span>)</span></div>
<div class="t ib" style="left:424px;top:641.3px">(0, 0, 255)</div>
<div class="t ib" style="left:242px;top:674.4px;font-weight:bold;color:#6dbdf5">HSV<span style="color:#fff;white-space:pre">       (<span class="lk">h</span>, <span class="lk">s</span>, <span class="lk">v</span>)</span></div>
<div class="t ib" style="left:424px;top:674.4px">(240°, 100%, 100%)</div>
<div class="t ib" style="left:242px;top:706.5px;font-weight:bold;color:#fff">Source</div>
<div class="t ib" style="left:424px;top:706.5px"><span class="lk">HTML/CSS<sup style="font-size:16px;vertical-align:6px;line-height:0">[1]</sup></span></div>
<div class="t ib" style="left:233px;top:739.6px;width:395px;text-align:center"><b>B</b>: Normalized to [0–255] (byte)</div>
<div class="a" style="left:605px;top:579px;width:13px;height:13px;border-radius:50%;background:radial-gradient(circle at 5px 4px,#6fa8ee,#1a4fb8);border:1px solid #0d3a9a"></div><div class="t" style="left:610px;top:580px;font-size:10px;color:#fff;font-weight:bold;font-family:'Liberation Serif',serif">i</div>
<div class="a" style="left:669px;top:94px;width:15px;height:686px;background:#c4c2bd"></div>
<div class="btn" style="left:669px;top:94px;width:15px;height:15px"></div><svg class="a" style="left:672px;top:99px" width="9" height="6" viewBox="0 0 9 6"><path d="M0 6l4.500-6 4.500 6z"/></svg>
<div class="btn" style="left:669px;top:110px;width:15px;height:22px"></div>
<div class="btn" style="left:669px;top:763px;width:15px;height:16px"></div><svg class="a" style="left:672px;top:768px" width="9" height="6" viewBox="0 0 9 6"><path d="M0 0l4.500 6 4.500-6z"/></svg>
<div class="a" style="left:0;top:780px;width:687px;height:20px;background:#dcdad5"></div>
<div class="a" style="left:0;top:780px;width:669px;height:16px;background:#c4c2bd;border-bottom:1px solid #fff"></div>
<div class="btn" style="left:-10px;top:780px;width:242px;height:15px"></div>
<div class="btn" style="left:654px;top:780px;width:14px;height:15px"></div><svg class="a" style="left:659px;top:784px" width="6" height="9" viewBox="0 0 6 9"><path d="M0 0l6 4.500-6 4.500z"/></svg>
<div class="a" style="left:684px;top:1px;width:3px;height:799px;background:linear-gradient(90deg,#dcdad5 0 1px,#4a4a4a 1px 2px,#fff 2px 3px);z-index:4"></div>
</div>
</body>
</html>
